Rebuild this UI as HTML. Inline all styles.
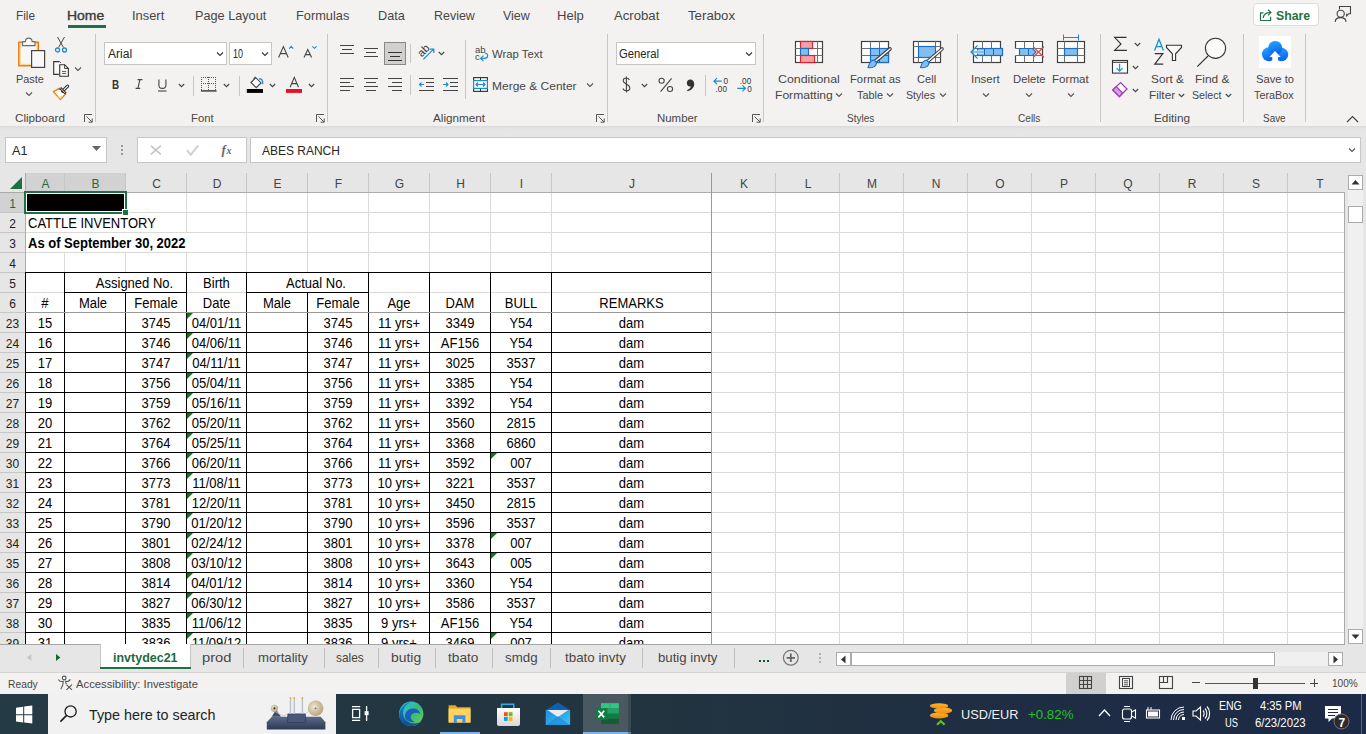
<!DOCTYPE html>
<html><head><meta charset="utf-8"><style>
html,body{margin:0;padding:0;}
body{width:1366px;height:734px;overflow:hidden;position:relative;background:#f3f2f1;font-family:"Liberation Sans", sans-serif;}
.t{position:absolute;white-space:pre;font-family:"Liberation Sans", sans-serif;}
.r{position:absolute;}
svg.r{overflow:visible;}
</style></head><body>
<div class="r" style="left:0px;top:0px;width:1366px;height:126px;background:#f3f2f1"></div>
<div class="r" style="left:0px;top:126px;width:1366px;height:47px;background:#e6e6e6"></div>
<div class="r" style="left:0px;top:126px;width:1366px;height:3px;background:linear-gradient(#d9d9d9,#e6e6e6)"></div>
<div class="t" style="left:16.33px;top:9.97px;font-size:12.2px;line-height:12.2px;color:#484644;font-weight:400;transform:scaleX(0.9703);transform-origin:0 0;">File</div>
<div class="t" style="left:67.36px;top:9.97px;font-size:12.2px;line-height:12.2px;color:#3b3a39;font-weight:400;transform:scaleX(1.1440);transform-origin:0 0;-webkit-text-stroke:0.35px #3b3a39;">Home</div>
<div class="t" style="left:132.14px;top:9.97px;font-size:12.2px;line-height:12.2px;color:#484644;font-weight:400;transform:scaleX(1.0567);transform-origin:0 0;">Insert</div>
<div class="t" style="left:195.16px;top:9.97px;font-size:12.2px;line-height:12.2px;color:#484644;font-weight:400;transform:scaleX(1.0403);transform-origin:0 0;">Page Layout</div>
<div class="t" style="left:296.35px;top:9.97px;font-size:12.2px;line-height:12.2px;color:#484644;font-weight:400;transform:scaleX(1.0504);transform-origin:0 0;">Formulas</div>
<div class="t" style="left:378.46px;top:9.97px;font-size:12.2px;line-height:12.2px;color:#484644;font-weight:400;transform:scaleX(1.0414);transform-origin:0 0;">Data</div>
<div class="t" style="left:433.98px;top:9.97px;font-size:12.2px;line-height:12.2px;color:#484644;font-weight:400;transform:scaleX(1.0215);transform-origin:0 0;">Review</div>
<div class="t" style="left:503.00px;top:9.97px;font-size:12.2px;line-height:12.2px;color:#484644;font-weight:400;transform:scaleX(1.0229);transform-origin:0 0;">View</div>
<div class="t" style="left:556.93px;top:9.97px;font-size:12.2px;line-height:12.2px;color:#484644;font-weight:400;transform:scaleX(1.0705);transform-origin:0 0;">Help</div>
<div class="t" style="left:614.00px;top:9.97px;font-size:12.2px;line-height:12.2px;color:#484644;font-weight:400;transform:scaleX(1.0794);transform-origin:0 0;">Acrobat</div>
<div class="t" style="left:688.00px;top:9.97px;font-size:12.2px;line-height:12.2px;color:#484644;font-weight:400;transform:scaleX(1.0864);transform-origin:0 0;">Terabox</div>
<div class="r" style="left:68px;top:25px;width:38px;height:3px;background:#1e7145"></div>
<div class="r" style="left:1253px;top:3px;width:66px;height:23px;background:#fff;border:1px solid #dedcda;box-sizing:border-box;border-radius:4px"></div>
<svg class="r" style="left:1256px;top:6px" width="19" height="18" viewBox="1256 6 19 18"><path d="M1263.5 12.8 H1260.5 V20.5 H1270.6 V16.8" fill="none" stroke="#217346" stroke-width="1.2"/><path d="M1263.2 18 C1263.6 14 1266.4 12.6 1270 12.6" fill="none" stroke="#217346" stroke-width="1.2"/><path d="M1268 9.8 L1271 12.6 L1268 15.4" fill="none" stroke="#217346" stroke-width="1.2"/></svg>
<div class="t" style="left:1276.00px;top:9.30px;font-size:13px;line-height:13px;color:#217346;font-weight:700;transform:scaleX(0.9471);transform-origin:0 0;">Share</div>
<svg class="r" style="left:1330px;top:4px" width="26" height="22" viewBox="1330 4 26 22"><circle cx="1340.7" cy="13.8" r="3.6" fill="none" stroke="#444" stroke-width="1.1"/><path d="M1335.2 22 C1335.2 19.2 1337.6 17.6 1340.6 17.6 C1343.6 17.6 1346 19.2 1346 22" fill="none" stroke="#444" stroke-width="1.1"/><path d="M1339.5 9.5 V6.5 H1350.5 V13.8 H1348.5 L1346.6 15.8 V13.8" fill="none" stroke="#444" stroke-width="1.1"/></svg>
<div class="r" style="left:95px;top:34px;width:1px;height:88px;background:#c8c6c4"></div>
<div class="r" style="left:327px;top:34px;width:1px;height:88px;background:#c8c6c4"></div>
<div class="r" style="left:607px;top:34px;width:1px;height:88px;background:#c8c6c4"></div>
<div class="r" style="left:763px;top:34px;width:1px;height:88px;background:#c8c6c4"></div>
<div class="r" style="left:957px;top:34px;width:1px;height:88px;background:#c8c6c4"></div>
<div class="r" style="left:1100px;top:34px;width:1px;height:88px;background:#c8c6c4"></div>
<div class="r" style="left:1243px;top:34px;width:1px;height:88px;background:#c8c6c4"></div>
<div class="r" style="left:1305px;top:34px;width:1px;height:88px;background:#c8c6c4"></div>
<div class="t" style="left:14.70px;top:112.73px;font-size:11.3px;line-height:11.3px;color:#484644;font-weight:400;transform:scaleX(1.0318);transform-origin:0 0;">Clipboard</div>
<div class="t" style="left:191.20px;top:112.73px;font-size:11.3px;line-height:11.3px;color:#484644;font-weight:400;transform:scaleX(0.9972);transform-origin:0 0;">Font</div>
<div class="t" style="left:432.80px;top:112.73px;font-size:11.3px;line-height:11.3px;color:#484644;font-weight:400;transform:scaleX(1.0353);transform-origin:0 0;">Alignment</div>
<div class="t" style="left:657.30px;top:112.73px;font-size:11.3px;line-height:11.3px;color:#484644;font-weight:400;transform:scaleX(1.0120);transform-origin:0 0;">Number</div>
<div class="t" style="left:846.70px;top:112.73px;font-size:11.3px;line-height:11.3px;color:#484644;font-weight:400;transform:scaleX(0.8870);transform-origin:0 0;">Styles</div>
<div class="t" style="left:1017.70px;top:112.73px;font-size:11.3px;line-height:11.3px;color:#484644;font-weight:400;transform:scaleX(0.8916);transform-origin:0 0;">Cells</div>
<div class="t" style="left:1153.60px;top:112.73px;font-size:11.3px;line-height:11.3px;color:#484644;font-weight:400;transform:scaleX(1.0450);transform-origin:0 0;">Editing</div>
<div class="t" style="left:1263.40px;top:112.73px;font-size:11.3px;line-height:11.3px;color:#484644;font-weight:400;transform:scaleX(0.8796);transform-origin:0 0;">Save</div>
<svg class="r" style="left:84px;top:114px;" width="9" height="9" viewBox="0 0 9 9"><path d="M0.5 8 V0.5 H8" fill="none" stroke="#555" stroke-width="1"/><path d="M2.5 2.5 L8 8 M4.5 8.2 H8.2 V4.5" fill="none" stroke="#555" stroke-width="1"/></svg>
<svg class="r" style="left:316px;top:114px;" width="9" height="9" viewBox="0 0 9 9"><path d="M0.5 8 V0.5 H8" fill="none" stroke="#555" stroke-width="1"/><path d="M2.5 2.5 L8 8 M4.5 8.2 H8.2 V4.5" fill="none" stroke="#555" stroke-width="1"/></svg>
<svg class="r" style="left:596px;top:114px;" width="9" height="9" viewBox="0 0 9 9"><path d="M0.5 8 V0.5 H8" fill="none" stroke="#555" stroke-width="1"/><path d="M2.5 2.5 L8 8 M4.5 8.2 H8.2 V4.5" fill="none" stroke="#555" stroke-width="1"/></svg>
<svg class="r" style="left:752px;top:114px;" width="9" height="9" viewBox="0 0 9 9"><path d="M0.5 8 V0.5 H8" fill="none" stroke="#555" stroke-width="1"/><path d="M2.5 2.5 L8 8 M4.5 8.2 H8.2 V4.5" fill="none" stroke="#555" stroke-width="1"/></svg>
<svg class="r" style="left:1346px;top:115px;" width="13" height="8" viewBox="0 0 13 8"><path d="M1 7 L6.5 1.5 L12 7" fill="none" stroke="#444" stroke-width="1.2"/></svg>
<svg class="r" style="left:14px;top:34px" width="36" height="38" viewBox="14 34 36 38"><rect x="18.8" y="42.2" width="19.6" height="23.6" fill="#fcd98a" stroke="#e3730f" stroke-width="1.3"/>
<rect x="20.8" y="45" width="15.6" height="18.8" fill="#f7f7f7"/>
<path d="M22.6 45.6 V41.6 H25.4 C25.6 37 31.8 37 32.2 41.6 H35 V45.6 Z" fill="#fafafa" stroke="#6a6a6a" stroke-width="1.1"/>
<rect x="31.6" y="50.6" width="13" height="16.8" fill="#f9f9f9" stroke="#444" stroke-width="1.2"/></svg>
<div class="t" style="left:15.70px;top:73.73px;font-size:11.3px;line-height:11.3px;color:#484644;font-weight:400;transform:scaleX(0.9649);transform-origin:0 0;">Paste</div>
<svg class="r" style="left:25px;top:91px;" width="8" height="6" viewBox="0 0 8 6"><path d="M1 1.5 L4 4.5 L7 1.5" fill="none" stroke="#555" stroke-width="1.1"/></svg>
<svg class="r" style="left:54px;top:36px;" width="14" height="17" viewBox="0 0 14 17"><path d="M3.5 1 L9.5 11.5 M10.5 1 L4.5 11.5" fill="none" stroke="#444" stroke-width="1"/><circle cx="3.5" cy="14" r="2" fill="none" stroke="#1e8bcd" stroke-width="1.3"/><circle cx="10.5" cy="14" r="2" fill="none" stroke="#1e8bcd" stroke-width="1.3"/></svg>
<svg class="r" style="left:50px;top:58px" width="22" height="22" viewBox="50 58 22 22"><path d="M59.6 61.6 H53.7 V74.4 H58.8" fill="#fafafa" stroke="#333" stroke-width="1.1"/><path d="M59.6 61.6 L60.8 62.8" stroke="#333" stroke-width="1"/>
<path d="M59.7 64.7 H64.6 L68.4 68.5 V76.2 H59.7 Z" fill="#fafafa" stroke="#333" stroke-width="1.1"/><path d="M64.6 64.7 V68.5 H68.4" fill="none" stroke="#333" stroke-width="0.9"/>
<path d="M62 71.4 H66.2 M62 73.4 H66.2" stroke="#444" stroke-width="0.9"/></svg>
<svg class="r" style="left:74px;top:66px;" width="8" height="6" viewBox="0 0 8 6"><path d="M1 1.5 L4 4.5 L7 1.5" fill="none" stroke="#555" stroke-width="1.1"/></svg>
<svg class="r" style="left:50px;top:82px" width="22" height="20" viewBox="50 82 22 20"><path d="M53.4 91.6 L59.8 88.2 L65.6 94 L60.4 99.6 Z" fill="#fff" stroke="#e67e17" stroke-width="1.4" stroke-linejoin="round"/>
<path d="M56.8 96.4 L62.8 96.2 L60.4 99 Z" fill="#fcd77c"/>
<path d="M62.6 91.2 L67.6 86.2" stroke="#333" stroke-width="3.2" stroke-linecap="round"/><path d="M62.6 91.2 L67.6 86.2" stroke="#f6f6f6" stroke-width="1.1" stroke-linecap="round"/>
<path d="M60.2 88 L65.8 93.6" stroke="#333" stroke-width="2.6"/><path d="M60.6 88.4 L65.4 93.2" stroke="#f6f6f6" stroke-width="0.8"/></svg>
<div class="r" style="left:104px;top:42px;width:123px;height:23px;background:#fff;border:1px solid #c8c6c4;box-sizing:border-box"></div>
<div class="t" style="left:107.50px;top:48.14px;font-size:12px;line-height:12px;color:#262626;font-weight:400;transform:scaleX(1.0069);transform-origin:0 0;">Arial</div>
<svg class="r" style="left:216px;top:51px;" width="8" height="6" viewBox="0 0 8 6"><path d="M1 1.5 L4 4.5 L7 1.5" fill="none" stroke="#333" stroke-width="1.1"/></svg>
<div class="r" style="left:229px;top:42px;width:43px;height:23px;background:#fff;border:1px solid #c8c6c4;box-sizing:border-box"></div>
<div class="t" style="left:232.80px;top:48.14px;font-size:12px;line-height:12px;color:#262626;font-weight:400;transform:scaleX(0.7460);transform-origin:0 0;">10</div>
<svg class="r" style="left:261px;top:51px;" width="8" height="6" viewBox="0 0 8 6"><path d="M1 1.5 L4 4.5 L7 1.5" fill="none" stroke="#333" stroke-width="1.1"/></svg>
<svg class="r" style="left:274px;top:40px" width="46" height="22" viewBox="274 40 46 22"><path d="M1278.6 57.5 L1283.4 46.6 L1288.2 57.5 M1280.4 53.6 H1286.4" transform="translate(-1000,0)" fill="none" stroke="#444" stroke-width="1.1"/>
<path d="M289.2 48.6 L291.2 46.3 L293.2 48.6" fill="none" stroke="#1e8bcd" stroke-width="1.1"/>
<path d="M304 57.5 L307.8 49.6 L311.6 57.5 M305.4 54.6 H310.2" fill="none" stroke="#444" stroke-width="1.1"/>
<path d="M312.4 46.4 L314.5 48.3 L316.6 46.4" fill="none" stroke="#1e8bcd" stroke-width="1.1"/></svg>
<svg class="r" style="left:108px;top:74px" width="212" height="22" viewBox="108 74 212 22"><path d="M139.9 79.6 L137.9 88.4 M137.6 79.6 H142.4 M135.6 88.4 H140.2" fill="none" stroke="#444" stroke-width="1.1"/>
<path d="M158.9 79.4 V85.2 C158.9 89.4 165.9 89.4 165.9 85.2 V79.4" fill="none" stroke="#444" stroke-width="1.1"/>
<path d="M158 91 H166.6" stroke="#444" stroke-width="1.1"/>
<rect x="201" y="77" width="1" height="1" fill="#555"/><rect x="201" y="83" width="1" height="1" fill="#555"/><rect x="203" y="77" width="1" height="1" fill="#555"/><rect x="203" y="83" width="1" height="1" fill="#555"/><rect x="205" y="77" width="1" height="1" fill="#555"/><rect x="205" y="83" width="1" height="1" fill="#555"/><rect x="207" y="77" width="1" height="1" fill="#555"/><rect x="207" y="83" width="1" height="1" fill="#555"/><rect x="209" y="77" width="1" height="1" fill="#555"/><rect x="209" y="83" width="1" height="1" fill="#555"/><rect x="211" y="77" width="1" height="1" fill="#555"/><rect x="211" y="83" width="1" height="1" fill="#555"/><rect x="213" y="77" width="1" height="1" fill="#555"/><rect x="213" y="83" width="1" height="1" fill="#555"/><rect x="215" y="77" width="1" height="1" fill="#555"/><rect x="215" y="83" width="1" height="1" fill="#555"/><rect x="201" y="77" width="1" height="1" fill="#555"/><rect x="208" y="77" width="1" height="1" fill="#555"/><rect x="215" y="77" width="1" height="1" fill="#555"/><rect x="201" y="79" width="1" height="1" fill="#555"/><rect x="208" y="79" width="1" height="1" fill="#555"/><rect x="215" y="79" width="1" height="1" fill="#555"/><rect x="201" y="81" width="1" height="1" fill="#555"/><rect x="208" y="81" width="1" height="1" fill="#555"/><rect x="215" y="81" width="1" height="1" fill="#555"/><rect x="201" y="83" width="1" height="1" fill="#555"/><rect x="208" y="83" width="1" height="1" fill="#555"/><rect x="215" y="83" width="1" height="1" fill="#555"/><rect x="201" y="85" width="1" height="1" fill="#555"/><rect x="208" y="85" width="1" height="1" fill="#555"/><rect x="215" y="85" width="1" height="1" fill="#555"/><rect x="201" y="87" width="1" height="1" fill="#555"/><rect x="208" y="87" width="1" height="1" fill="#555"/><rect x="215" y="87" width="1" height="1" fill="#555"/><rect x="201" y="89" width="1" height="1" fill="#555"/><rect x="208" y="89" width="1" height="1" fill="#555"/><rect x="215" y="89" width="1" height="1" fill="#555"/><rect x="201" y="90.2" width="15.5" height="1.4" fill="#333"/>
<path d="M251 82.5 L255.8 77.7 L261 82.9 L256.2 87.7 Z" fill="#fff" stroke="#444" stroke-width="1.1"/>
<path d="M253.6 78.8 L255.6 76.8" stroke="#444" stroke-width="1.1"/>
<path d="M258.8 79.2 C261.6 78 263.2 80.6 262.4 84.2" fill="none" stroke="#1e8bcd" stroke-width="1.4"/>
<rect x="246.8" y="89" width="16.2" height="3.9" fill="#000"/>
<path d="M290.1 87.3 L294.3 77.3 L298.5 87.3 M291.7 83.6 H296.9" fill="none" stroke="#444" stroke-width="1.1"/>
<rect x="286" y="89" width="16" height="3.9" fill="#e81123"/></svg>
<div class="t" style="left:111.80px;top:78.72px;font-size:12.5px;line-height:12.5px;color:#333;font-weight:700;transform:scaleX(0.7889);transform-origin:0 0;">B</div>
<svg class="r" style="left:177.5px;top:82.5px;" width="7" height="5" viewBox="0 0 7 5"><path d="M0.8 1 L3.5 3.7 L6.2 1" fill="none" stroke="#444" stroke-width="1.1"/></svg>
<div class="r" style="left:193px;top:76px;width:1px;height:20px;background:#c8c6c4"></div>
<svg class="r" style="left:222.8px;top:82.5px;" width="7" height="5" viewBox="0 0 7 5"><path d="M0.8 1 L3.5 3.7 L6.2 1" fill="none" stroke="#444" stroke-width="1.1"/></svg>
<div class="r" style="left:239px;top:76px;width:1px;height:20px;background:#c8c6c4"></div>
<svg class="r" style="left:269.1px;top:82.5px;" width="7" height="5" viewBox="0 0 7 5"><path d="M0.8 1 L3.5 3.7 L6.2 1" fill="none" stroke="#444" stroke-width="1.1"/></svg>
<svg class="r" style="left:308.0px;top:82.5px;" width="7" height="5" viewBox="0 0 7 5"><path d="M0.8 1 L3.5 3.7 L6.2 1" fill="none" stroke="#444" stroke-width="1.1"/></svg>
<svg class="r" style="left:338px;top:44px;" width="18" height="16" viewBox="0 0 18 16"><path d="M2 1.5 H16" stroke="#444" stroke-width="1"/><path d="M4 5.5 H14" stroke="#444" stroke-width="1"/><path d="M2 9.5 H16" stroke="#444" stroke-width="1"/></svg>
<svg class="r" style="left:362px;top:46px;" width="18" height="16" viewBox="0 0 18 16"><path d="M2 2.5 H16" stroke="#444" stroke-width="1"/><path d="M4 6.5 H14" stroke="#444" stroke-width="1"/><path d="M2 10.5 H16" stroke="#444" stroke-width="1"/></svg>
<div class="r" style="left:384px;top:42px;width:22px;height:23px;background:#d2d0ce;border:1px solid #8a8886;box-sizing:border-box"></div>
<svg class="r" style="left:386px;top:48px;" width="18" height="16" viewBox="0 0 18 16"><path d="M2 4.5 H16" stroke="#333" stroke-width="1"/><path d="M4 8.5 H14" stroke="#333" stroke-width="1"/><path d="M2 12.5 H16" stroke="#333" stroke-width="1"/></svg>
<div class="r" style="left:410px;top:44px;width:1px;height:19px;background:#c8c6c4"></div>
<svg class="r" style="left:412px;top:40px" width="26" height="24" viewBox="412 40 26 24"><text x="423.4" y="54.2" text-anchor="middle" font-family="Liberation Sans" font-size="11" fill="#333" transform="rotate(-45 423.4 50.4)">ab</text>
<path d="M423.4 59.4 L433.4 49.4 M429.8 49.2 H433.8 V53" fill="none" stroke="#1e8bcd" stroke-width="1.2"/></svg>
<svg class="r" style="left:438.0px;top:50.8px;" width="7" height="5" viewBox="0 0 7 5"><path d="M0.8 1 L3.5 3.7 L6.2 1" fill="none" stroke="#444" stroke-width="1.1"/></svg>
<div class="r" style="left:465px;top:40px;width:1px;height:59px;background:#c8c6c4"></div>
<svg class="r" style="left:472px;top:42px" width="20" height="22" viewBox="472 42 20 22"><text x="475" y="52.6" font-family="Liberation Sans" font-size="9.5" fill="#444">ab</text><text x="475" y="59.8" font-family="Liberation Sans" font-size="9.5" fill="#444">c</text>
<path d="M481.2 58.4 H484.4 C488.6 58.4 488.6 53 484.8 53" fill="none" stroke="#1e8bcd" stroke-width="1.2"/><path d="M483.4 55.6 L480.6 58.4 L483.4 61.2" fill="none" stroke="#1e8bcd" stroke-width="1.2"/></svg>
<div class="t" style="left:492.40px;top:48.73px;font-size:11.3px;line-height:11.3px;color:#484644;font-weight:400;transform:scaleX(1.0019);transform-origin:0 0;">Wrap Text</div>
<svg class="r" style="left:338px;top:77px;" width="18" height="16" viewBox="0 0 18 16"><path d="M2 1.5 H16" stroke="#444" stroke-width="1"/><path d="M2 5.5 H12" stroke="#444" stroke-width="1"/><path d="M2 9.5 H16" stroke="#444" stroke-width="1"/><path d="M2 13.5 H12" stroke="#444" stroke-width="1"/></svg>
<svg class="r" style="left:362px;top:77px;" width="18" height="16" viewBox="0 0 18 16"><path d="M2 1.5 H16" stroke="#444" stroke-width="1"/><path d="M4 5.5 H14" stroke="#444" stroke-width="1"/><path d="M2 9.5 H16" stroke="#444" stroke-width="1"/><path d="M4 13.5 H14" stroke="#444" stroke-width="1"/></svg>
<svg class="r" style="left:386px;top:77px;" width="18" height="16" viewBox="0 0 18 16"><path d="M2 1.5 H16" stroke="#444" stroke-width="1"/><path d="M6 5.5 H16" stroke="#444" stroke-width="1"/><path d="M2 9.5 H16" stroke="#444" stroke-width="1"/><path d="M6 13.5 H16" stroke="#444" stroke-width="1"/></svg>
<div class="r" style="left:410px;top:75px;width:1px;height:20px;background:#c8c6c4"></div>
<svg class="r" style="left:418px;top:77px;" width="17" height="16" viewBox="0 0 17 16"><path d="M1 1.5 H16 M8 5.5 H16 M8 9.5 H16 M1 13.5 H16" stroke="#444"/><path d="M6 7.5 H1.5 M3.5 5.5 L1.5 7.5 L3.5 9.5" fill="none" stroke="#1e8bcd" stroke-width="1.1"/></svg>
<svg class="r" style="left:442px;top:77px;" width="17" height="16" viewBox="0 0 17 16"><path d="M1 1.5 H16 M8 5.5 H16 M8 9.5 H16 M1 13.5 H16" stroke="#444"/><path d="M1 7.5 H6 M4 5.5 L6 7.5 L4 9.5" fill="none" stroke="#1e8bcd" stroke-width="1.1"/></svg>
<div class="r" style="left:465px;top:75px;width:1px;height:20px;background:#c8c6c4"></div>
<svg class="r" style="left:470px;top:74px" width="22" height="22" viewBox="470 74 22 22"><rect x="473.6" y="77.6" width="13.8" height="13.8" fill="none" stroke="#333" stroke-width="1.1"/>
<path d="M480.5 77.6 V80.5 M480.5 88.5 V91.4" stroke="#333" stroke-width="1"/>
<rect x="473.6" y="80.6" width="13.8" height="7.8" fill="#fff" stroke="#1e8bcd" stroke-width="1.2"/>
<path d="M476 84.5 H485 M478 82.5 L476 84.5 L478 86.5 M483 82.5 L485 84.5 L483 86.5" fill="none" stroke="#1e8bcd" stroke-width="1.2"/></svg>
<div class="t" style="left:492.40px;top:80.73px;font-size:11.3px;line-height:11.3px;color:#484644;font-weight:400;transform:scaleX(1.0603);transform-origin:0 0;">Merge &amp; Center</div>
<svg class="r" style="left:586px;top:82px;" width="8" height="6" viewBox="0 0 8 6"><path d="M1 1.5 L4 4.5 L7 1.5" fill="none" stroke="#555" stroke-width="1.1"/></svg>
<div class="r" style="left:616px;top:42px;width:140px;height:23px;background:#fff;border:1px solid #c8c6c4;box-sizing:border-box"></div>
<div class="t" style="left:619.20px;top:48.14px;font-size:12px;line-height:12px;color:#262626;font-weight:400;transform:scaleX(0.9399);transform-origin:0 0;">General</div>
<svg class="r" style="left:745px;top:51px;" width="8" height="6" viewBox="0 0 8 6"><path d="M1 1.5 L4 4.5 L7 1.5" fill="none" stroke="#333" stroke-width="1.1"/></svg>
<svg class="r" style="left:618px;top:72px" width="142" height="24" viewBox="618 72 142 24"><path d="M629.4 80 C628.6 78.4 627.4 78 626.2 78 C624.4 78 623.2 79.2 623.2 80.8 C623.2 84.4 629.8 83.6 629.8 88 C629.8 89.8 628.4 90.8 626.4 90.8 C624.8 90.8 623.6 90.2 622.8 88.6 M626.4 76.6 V92.6" fill="none" stroke="#444" stroke-width="1.1"/>
<path d="M671.6 78.4 L660.6 91.6" stroke="#444" stroke-width="1.1"/>
<ellipse cx="661.6" cy="80.7" rx="2.6" ry="2.5" fill="none" stroke="#444" stroke-width="1.1"/>
<ellipse cx="670" cy="89" rx="2.6" ry="2.5" fill="none" stroke="#444" stroke-width="1.1"/>
<path d="M690.2 79.6 C692.6 79.6 694.2 81.4 694.2 84 C694.2 87.6 691.6 90.2 687.6 91.2 L687 90.2 C689.4 89.2 690.6 88 690.8 86.6 C688.4 86.6 686.8 85.2 686.8 83.2 C686.8 81.2 688.2 79.6 690.2 79.6 Z" fill="#333"/>
<path d="M721.8 81.2 H714 M717 78.2 L714 81.2 L717 84.2" fill="none" stroke="#1e8bcd" stroke-width="1.2"/>
<path d="M737.2 88.3 H745.4 M742.4 85.3 L745.4 88.3 L742.4 91.3" fill="none" stroke="#1e8bcd" stroke-width="1.2"/>
<text x="723.4" y="83.5" font-family="Liberation Sans" font-size="8.2" fill="#333">0</text>
<text x="715.6" y="91.7" font-family="Liberation Sans" font-size="8.2" fill="#333">.00</text>
<text x="739.8" y="83.5" font-family="Liberation Sans" font-size="8.2" fill="#333">.00</text>
<text x="747.2" y="91.7" font-family="Liberation Sans" font-size="8.2" fill="#333">0</text></svg>
<svg class="r" style="left:640.8px;top:82.5px;" width="7" height="5" viewBox="0 0 7 5"><path d="M0.8 1 L3.5 3.7 L6.2 1" fill="none" stroke="#444" stroke-width="1.1"/></svg>
<div class="r" style="left:705px;top:75px;width:1px;height:21px;background:#c8c6c4"></div>
<svg class="r" style="left:790px;top:36px" width="40" height="32" viewBox="790 36 40 32"><rect x="795.5" y="41.5" width="27" height="21" fill="#fff" stroke="#404040" stroke-width="1.2"/>
<path d="M795.5 48.5 H822.5 M795.5 55.5 H822.5 M800.5 41.5 V62.5 M817.5 41.5 V62.5" stroke="#707070" stroke-width="1"/>
<rect x="800.5" y="41.5" width="12" height="7" fill="#f79ea6" stroke="#d9262e" stroke-width="1.2"/>
<rect x="800.5" y="48.5" width="8" height="7" fill="#83beec" stroke="#1a6fc4" stroke-width="1.2"/>
<rect x="800.5" y="55.5" width="14" height="7" fill="#f79ea6" stroke="#d9262e" stroke-width="1.2"/></svg>
<svg class="r" style="left:855px;top:36px" width="41" height="36" viewBox="855 36 41 36"><rect x="861.5" y="41.5" width="27" height="21" fill="#fff" stroke="#404040" stroke-width="1.2"/>
<path d="M861.5 48.5 H888.5 M861.5 55.5 H888.5 M870.5 41.5 V62.5 M879.5 41.5 V62.5" stroke="#707070" stroke-width="1"/>
<rect x="870.5" y="48.5" width="18" height="14" fill="#83beec" stroke="#1a6fc4" stroke-width="1.2"/>
<path d="M870.5 55.5 H888.5 M879.5 48.5 V62.5" stroke="#1a6fc4" stroke-width="1"/><path d="M874.5 62.0 L890 49" stroke="#404040" stroke-width="3.6" stroke-linecap="round"/>
<path d="M874.5 62.0 L890 49" stroke="#fff" stroke-width="1.5" stroke-linecap="round"/>
<path d="M868 67.5 C872 68.5 876.5 66.5 876.5 62.5 L874 60.0 C870 60.0 869 64.5 868 67.5 Z" fill="#83beec" stroke="#1a6fc4" stroke-width="1.1"/></svg>
<svg class="r" style="left:908px;top:36px" width="40" height="36" viewBox="908 36 40 36"><rect x="913.5" y="41.5" width="27" height="21" fill="#fff" stroke="#404040" stroke-width="1.2"/>
<path d="M913.5 46.5 H940.5 M913.5 57.5 H940.5 M918.5 41.5 V62.5 M935.5 41.5 V62.5" stroke="#707070" stroke-width="1"/>
<rect x="918.5" y="46.5" width="17" height="11" fill="#83beec" stroke="#1a6fc4" stroke-width="1.2"/><path d="M927.0 62.0 L942 49" stroke="#404040" stroke-width="3.6" stroke-linecap="round"/>
<path d="M927.0 62.0 L942 49" stroke="#fff" stroke-width="1.5" stroke-linecap="round"/>
<path d="M920.5 67.5 C924.5 68.5 929.0 66.5 929.0 62.5 L926.5 60.0 C922.5 60.0 921.5 64.5 920.5 67.5 Z" fill="#83beec" stroke="#1a6fc4" stroke-width="1.1"/></svg>
<div class="t" style="left:778.30px;top:73.73px;font-size:11.3px;line-height:11.3px;color:#484644;font-weight:400;transform:scaleX(1.0944);transform-origin:0 0;">Conditional</div>
<div class="t" style="left:774.50px;top:89.73px;font-size:11.3px;line-height:11.3px;color:#484644;font-weight:400;transform:scaleX(1.0706);transform-origin:0 0;">Formatting</div>
<svg class="r" style="left:835px;top:92px;" width="8" height="6" viewBox="0 0 8 6"><path d="M1 1.5 L4 4.5 L7 1.5" fill="none" stroke="#555" stroke-width="1.1"/></svg>
<div class="t" style="left:849.50px;top:73.73px;font-size:11.3px;line-height:11.3px;color:#484644;font-weight:400;transform:scaleX(0.9961);transform-origin:0 0;">Format as</div>
<div class="t" style="left:857.20px;top:89.73px;font-size:11.3px;line-height:11.3px;color:#484644;font-weight:400;transform:scaleX(0.9654);transform-origin:0 0;">Table</div>
<svg class="r" style="left:886px;top:92px;" width="8" height="6" viewBox="0 0 8 6"><path d="M1 1.5 L4 4.5 L7 1.5" fill="none" stroke="#555" stroke-width="1.1"/></svg>
<div class="t" style="left:917.40px;top:73.73px;font-size:11.3px;line-height:11.3px;color:#484644;font-weight:400;transform:scaleX(0.9815);transform-origin:0 0;">Cell</div>
<div class="t" style="left:906.40px;top:89.73px;font-size:11.3px;line-height:11.3px;color:#484644;font-weight:400;transform:scaleX(0.9417);transform-origin:0 0;">Styles</div>
<svg class="r" style="left:939px;top:92px;" width="8" height="6" viewBox="0 0 8 6"><path d="M1 1.5 L4 4.5 L7 1.5" fill="none" stroke="#555" stroke-width="1.1"/></svg>
<svg class="r" style="left:966px;top:36px" width="40" height="32" viewBox="966 36 40 32"><rect x="973.5" y="41.5" width="27" height="21" fill="#fff" stroke="#404040" stroke-width="1.2"/>
<path d="M973.5 48.5 H1000.5 M973.5 55.5 H1000.5 M982.5 41.5 V62.5 M991.5 41.5 V62.5" stroke="#707070" stroke-width="1"/>
<rect x="977.5" y="48.5" width="25" height="7" fill="#83beec" stroke="#1a6fc4" stroke-width="1.2"/>
<path d="M984.5 48.5 V55.5 M993.5 48.5 V55.5" stroke="#1a6fc4" stroke-width="1"/>
<path d="M971.5 52 H984" stroke="#f3f2f1" stroke-width="3"/>
<path d="M971.5 52 H984 M977.5 45.5 L971 52 L977.5 58.5" fill="none" stroke="#1e8bcd" stroke-width="1.2"/></svg>
<div class="t" style="left:970.98px;top:73.73px;font-size:11.3px;line-height:11.3px;color:#484644;font-weight:400;transform:scaleX(1.0173);transform-origin:0 0;">Insert</div>
<svg class="r" style="left:982px;top:92px;" width="8" height="6" viewBox="0 0 8 6"><path d="M1 1.5 L4 4.5 L7 1.5" fill="none" stroke="#555" stroke-width="1.1"/></svg>
<svg class="r" style="left:1010px;top:36px" width="40" height="32" viewBox="1010 36 40 32"><path d="M1015.5 48.5 V41.5 H1042.5 V62.5 H1015.5 V55.5" fill="#fff" stroke="#404040" stroke-width="1.2"/>
<path d="M1015.5 48.5 H1042.5 M1015.5 55.5 H1042.5 M1024.5 41.5 V62.5 M1033.5 41.5 V62.5" stroke="#707070" stroke-width="1"/>
<path d="M1019.5 48.5 H1032.5 L1036 52 L1032.5 55.5 H1019.5 Z" fill="#83beec" stroke="#1a6fc4" stroke-width="1.2"/>
<path d="M1028.5 48.5 V55.5" stroke="#1a6fc4" stroke-width="1"/>
<path d="M1033 46.5 L1044 57.5 M1044 46.5 L1033 57.5" stroke="#e8464f" stroke-width="1.2"/></svg>
<div class="t" style="left:1012.50px;top:73.73px;font-size:11.3px;line-height:11.3px;color:#484644;font-weight:400;transform:scaleX(0.9978);transform-origin:0 0;">Delete</div>
<svg class="r" style="left:1025px;top:92px;" width="8" height="6" viewBox="0 0 8 6"><path d="M1 1.5 L4 4.5 L7 1.5" fill="none" stroke="#555" stroke-width="1.1"/></svg>
<svg class="r" style="left:1052px;top:32px" width="38" height="36" viewBox="1052 32 38 36"><rect x="1057.5" y="41.5" width="27" height="21" fill="#fff" stroke="#404040" stroke-width="1.2"/>
<path d="M1057.5 48.5 H1084.5 M1057.5 55.5 H1084.5 M1064.5 41.5 V62.5 M1077.5 41.5 V62.5" stroke="#707070" stroke-width="1"/>
<rect x="1064.5" y="48.5" width="13" height="7" fill="#83beec" stroke="#1a6fc4" stroke-width="1.2"/>
<path d="M1063.5 37.5 H1078.5 M1063.5 34.5 V40.5 M1078.5 34.5 V40.5" stroke="#1e8bcd" stroke-width="1"/></svg>
<div class="t" style="left:1052.40px;top:73.73px;font-size:11.3px;line-height:11.3px;color:#484644;font-weight:400;transform:scaleX(1.0262);transform-origin:0 0;">Format</div>
<svg class="r" style="left:1067px;top:92px;" width="8" height="6" viewBox="0 0 8 6"><path d="M1 1.5 L4 4.5 L7 1.5" fill="none" stroke="#555" stroke-width="1.1"/></svg>
<svg class="r" style="left:1110px;top:34px" width="20" height="66" viewBox="1110 34 20 66"><path d="M1126 38 V37.4 H1114.6 L1121 44 L1114.6 50.4 H1126.4 V49.8" fill="none" stroke="#333" stroke-width="1.1"/>
<rect x="1112.5" y="60.5" width="15" height="12.6" fill="#fff" stroke="#333" stroke-width="1.1"/>
<path d="M1112.5 62.3 H1127.5" stroke="#333" stroke-width="1"/>
<path d="M1119.6 63.8 V71 M1116.6 68.2 L1119.6 71.2 L1122.6 68.2" fill="none" stroke="#1e8bcd" stroke-width="1.2"/>
<path d="M1112.8 90 L1120.6 82.6 L1127 89 L1119.4 96.6 Z" fill="#fff" stroke="#a03cb9" stroke-width="1.3"/>
<path d="M1112.8 90 L1116.2 86.6 L1122.6 93 L1119.4 96.6 Z" fill="#d79ee6" stroke="#a03cb9" stroke-width="1.3"/></svg>
<svg class="r" style="left:1134.1px;top:41.9px;" width="7" height="5" viewBox="0 0 7 5"><path d="M0.8 1 L3.5 3.7 L6.2 1" fill="none" stroke="#444" stroke-width="1.1"/></svg>
<svg class="r" style="left:1131.9px;top:64.5px;" width="7" height="5" viewBox="0 0 7 5"><path d="M0.8 1 L3.5 3.7 L6.2 1" fill="none" stroke="#444" stroke-width="1.1"/></svg>
<svg class="r" style="left:1131.6px;top:87.8px;" width="7" height="5" viewBox="0 0 7 5"><path d="M0.8 1 L3.5 3.7 L6.2 1" fill="none" stroke="#444" stroke-width="1.1"/></svg>
<svg class="r" style="left:1150px;top:36px" width="36" height="32" viewBox="1150 36 36 32"><path d="M1154.6 50.6 L1159 39.2 L1163.4 50.6 M1156.2 46.6 H1161.8" fill="none" stroke="#1e8bcd" stroke-width="1.3"/>
<path d="M1154.8 53.6 H1162.8 L1154.8 64.2 H1163.2" fill="none" stroke="#333" stroke-width="1.2"/>
<path d="M1166.5 45.3 H1181.5 V47.5 L1175.6 53.8 V60.5 H1172.4 V53.8 L1166.5 47.5 Z" fill="#fafafa" stroke="#333" stroke-width="1.1"/></svg>
<div class="t" style="left:1151.00px;top:73.73px;font-size:11.3px;line-height:11.3px;color:#484644;font-weight:400;transform:scaleX(1.0484);transform-origin:0 0;">Sort &amp;</div>
<div class="t" style="left:1149.30px;top:89.73px;font-size:11.3px;line-height:11.3px;color:#484644;font-weight:400;transform:scaleX(1.0378);transform-origin:0 0;">Filter</div>
<svg class="r" style="left:1178.0px;top:92.5px;" width="7" height="5" viewBox="0 0 7 5"><path d="M0.8 1 L3.5 3.7 L6.2 1" fill="none" stroke="#444" stroke-width="1.1"/></svg>
<svg class="r" style="left:1194px;top:36px" width="36" height="34" viewBox="1194 36 36 34"><circle cx="1215.5" cy="48.3" r="10.1" fill="#fafafa" stroke="#333" stroke-width="1.1"/>
<path d="M1208 56 L1197.3 66.7" stroke="#333" stroke-width="1.1"/></svg>
<div class="t" style="left:1194.70px;top:73.73px;font-size:11.3px;line-height:11.3px;color:#484644;font-weight:400;transform:scaleX(1.0569);transform-origin:0 0;">Find &amp;</div>
<div class="t" style="left:1191.60px;top:89.73px;font-size:11.3px;line-height:11.3px;color:#484644;font-weight:400;transform:scaleX(0.9393);transform-origin:0 0;">Select</div>
<svg class="r" style="left:1225.3px;top:92.5px;" width="7" height="5" viewBox="0 0 7 5"><path d="M0.8 1 L3.5 3.7 L6.2 1" fill="none" stroke="#444" stroke-width="1.1"/></svg>
<div class="r" style="left:1259px;top:36px;width:32px;height:32px;background:#fff"></div>
<svg class="r" style="left:1259px;top:36px" width="32" height="32" viewBox="1259 36 32 32"><defs><linearGradient id="tbg" x1="0" y1="0" x2="0.3" y2="1"><stop offset="0" stop-color="#2aa8ff"/><stop offset="1" stop-color="#0a66f0"/></linearGradient></defs>
<circle cx="1269" cy="54.2" r="7" fill="url(#tbg)"/><circle cx="1281.5" cy="54.5" r="6.7" fill="url(#tbg)"/><circle cx="1275.2" cy="48" r="7.1" fill="url(#tbg)"/>
<path d="M1275 50.9 L1280.6 57 H1278 V63 H1272.3 V57 H1269.6 Z" fill="#fff"/></svg>
<div class="t" style="left:1256.00px;top:73.73px;font-size:11.3px;line-height:11.3px;color:#484644;font-weight:400;transform:scaleX(0.9914);transform-origin:0 0;">Save to</div>
<div class="t" style="left:1254.30px;top:89.73px;font-size:11.3px;line-height:11.3px;color:#484644;font-weight:400;transform:scaleX(0.9547);transform-origin:0 0;">TeraBox</div>
<div class="r" style="left:5px;top:137px;width:102px;height:26px;background:#fff;border:1px solid #c6c6c6;box-sizing:border-box"></div>
<div class="t" style="left:12.10px;top:145.14px;font-size:12px;line-height:12px;color:#262626;font-weight:400;transform:scaleX(1.0531);transform-origin:0 0;">A1</div>
<svg class="r" style="left:92px;top:146px;" width="9" height="6" viewBox="0 0 9 6"><path d="M0 0 H9 L4.5 5 Z" fill="#666"/></svg>
<div class="r" style="left:121px;top:145px;width:2px;height:2px;background:#999"></div>
<div class="r" style="left:121px;top:149px;width:2px;height:2px;background:#999"></div>
<div class="r" style="left:121px;top:153px;width:2px;height:2px;background:#999"></div>
<div class="r" style="left:137px;top:137px;width:110px;height:26px;background:#fff;border:1px solid #c6c6c6;box-sizing:border-box"></div>
<svg class="r" style="left:146px;top:140px" width="94" height="20" viewBox="146 140 94 20"><path d="M150.8 145.6 L160.9 154.4 M160.9 145.6 L150.8 154.4" stroke="#c4c4c4" stroke-width="1.5"/>
<path d="M186.8 150.2 L190.8 154.8 L198.2 145.4" fill="none" stroke="#cfcfcf" stroke-width="2"/>
<text x="221.5" y="154" font-family="Liberation Serif" font-style="italic" font-weight="700" font-size="13" fill="#666">f</text>
<text x="226.6" y="154" font-family="Liberation Serif" font-style="italic" font-weight="700" font-size="10" fill="#666">x</text></svg>
<div class="r" style="left:250px;top:137px;width:1111px;height:26px;background:#fff;border:1px solid #c6c6c6;box-sizing:border-box"></div>
<div class="t" style="left:262.20px;top:145.14px;font-size:12px;line-height:12px;color:#262626;font-weight:400;transform:scaleX(0.9980);transform-origin:0 0;">ABES RANCH</div>
<svg class="r" style="left:1348px;top:147px;" width="8" height="6" viewBox="0 0 8 6"><path d="M1 1.5 L4 4.5 L7 1.5" fill="none" stroke="#555" stroke-width="1.1"/></svg>
<div class="r" style="left:0px;top:173px;width:1345px;height:471px;background:#fff"></div>
<div class="r" style="left:0px;top:173px;width:1345px;height:19px;background:#e6e6e6"></div>
<div class="r" style="left:0px;top:192px;width:25px;height:452px;background:#e6e6e6"></div>
<div class="r" style="left:26px;top:173px;width:100px;height:19px;background:#d2d2d2"></div>
<div class="r" style="left:0px;top:193px;width:25px;height:19px;background:#d2d2d2"></div>
<svg class="r" style="left:10px;top:177px;" width="13" height="13" viewBox="0 0 13 13"><path d="M12 0 V12 H0 Z" fill="#1f7145"/></svg>
<div class="r" style="left:64px;top:253px;width:1px;height:391px;background:#dadada"></div>
<div class="r" style="left:125px;top:192px;width:1px;height:20px;background:#dadada"></div>
<div class="r" style="left:125px;top:253px;width:1px;height:19px;background:#dadada"></div>
<div class="r" style="left:125px;top:293px;width:1px;height:351px;background:#dadada"></div>
<div class="r" style="left:186px;top:192px;width:1px;height:40px;background:#dadada"></div>
<div class="r" style="left:186px;top:253px;width:1px;height:391px;background:#dadada"></div>
<div class="r" style="left:246px;top:192px;width:1px;height:452px;background:#dadada"></div>
<div class="r" style="left:307px;top:192px;width:1px;height:80px;background:#dadada"></div>
<div class="r" style="left:307px;top:293px;width:1px;height:351px;background:#dadada"></div>
<div class="r" style="left:368px;top:192px;width:1px;height:452px;background:#dadada"></div>
<div class="r" style="left:429px;top:192px;width:1px;height:452px;background:#dadada"></div>
<div class="r" style="left:490px;top:192px;width:1px;height:452px;background:#dadada"></div>
<div class="r" style="left:551px;top:192px;width:1px;height:452px;background:#dadada"></div>
<div class="r" style="left:711px;top:192px;width:1px;height:452px;background:#dadada"></div>
<div class="r" style="left:775px;top:192px;width:1px;height:452px;background:#dadada"></div>
<div class="r" style="left:839px;top:192px;width:1px;height:452px;background:#dadada"></div>
<div class="r" style="left:903px;top:192px;width:1px;height:452px;background:#dadada"></div>
<div class="r" style="left:967px;top:192px;width:1px;height:452px;background:#dadada"></div>
<div class="r" style="left:1031px;top:192px;width:1px;height:452px;background:#dadada"></div>
<div class="r" style="left:1095px;top:192px;width:1px;height:452px;background:#dadada"></div>
<div class="r" style="left:1159px;top:192px;width:1px;height:452px;background:#dadada"></div>
<div class="r" style="left:1223px;top:192px;width:1px;height:452px;background:#dadada"></div>
<div class="r" style="left:1287px;top:192px;width:1px;height:452px;background:#dadada"></div>
<div class="r" style="left:1345px;top:192px;width:1px;height:452px;background:#dadada"></div>
<div class="r" style="left:25px;top:212px;width:1319px;height:1px;background:#dadada"></div>
<div class="r" style="left:25px;top:232px;width:1319px;height:1px;background:#dadada"></div>
<div class="r" style="left:25px;top:252px;width:1319px;height:1px;background:#dadada"></div>
<div class="r" style="left:25px;top:272px;width:1319px;height:1px;background:#dadada"></div>
<div class="r" style="left:25px;top:292px;width:1319px;height:1px;background:#dadada"></div>
<div class="r" style="left:25px;top:312px;width:1319px;height:1px;background:#dadada"></div>
<div class="r" style="left:25px;top:332px;width:1319px;height:1px;background:#dadada"></div>
<div class="r" style="left:25px;top:352px;width:1319px;height:1px;background:#dadada"></div>
<div class="r" style="left:25px;top:372px;width:1319px;height:1px;background:#dadada"></div>
<div class="r" style="left:25px;top:392px;width:1319px;height:1px;background:#dadada"></div>
<div class="r" style="left:25px;top:412px;width:1319px;height:1px;background:#dadada"></div>
<div class="r" style="left:25px;top:432px;width:1319px;height:1px;background:#dadada"></div>
<div class="r" style="left:25px;top:452px;width:1319px;height:1px;background:#dadada"></div>
<div class="r" style="left:25px;top:472px;width:1319px;height:1px;background:#dadada"></div>
<div class="r" style="left:25px;top:492px;width:1319px;height:1px;background:#dadada"></div>
<div class="r" style="left:25px;top:512px;width:1319px;height:1px;background:#dadada"></div>
<div class="r" style="left:25px;top:532px;width:1319px;height:1px;background:#dadada"></div>
<div class="r" style="left:25px;top:552px;width:1319px;height:1px;background:#dadada"></div>
<div class="r" style="left:25px;top:572px;width:1319px;height:1px;background:#dadada"></div>
<div class="r" style="left:25px;top:592px;width:1319px;height:1px;background:#dadada"></div>
<div class="r" style="left:25px;top:612px;width:1319px;height:1px;background:#dadada"></div>
<div class="r" style="left:25px;top:632px;width:1319px;height:1px;background:#dadada"></div>
<div class="r" style="left:25px;top:652px;width:1319px;height:1px;background:#dadada"></div>
<div class="r" style="left:64px;top:173px;width:1px;height:19px;background:#c6c6c6"></div>
<div class="r" style="left:125px;top:173px;width:1px;height:19px;background:#c6c6c6"></div>
<div class="r" style="left:186px;top:173px;width:1px;height:19px;background:#c6c6c6"></div>
<div class="r" style="left:246px;top:173px;width:1px;height:19px;background:#c6c6c6"></div>
<div class="r" style="left:307px;top:173px;width:1px;height:19px;background:#c6c6c6"></div>
<div class="r" style="left:368px;top:173px;width:1px;height:19px;background:#c6c6c6"></div>
<div class="r" style="left:429px;top:173px;width:1px;height:19px;background:#c6c6c6"></div>
<div class="r" style="left:490px;top:173px;width:1px;height:19px;background:#c6c6c6"></div>
<div class="r" style="left:551px;top:173px;width:1px;height:19px;background:#c6c6c6"></div>
<div class="r" style="left:711px;top:173px;width:1px;height:19px;background:#c6c6c6"></div>
<div class="r" style="left:775px;top:173px;width:1px;height:19px;background:#c6c6c6"></div>
<div class="r" style="left:839px;top:173px;width:1px;height:19px;background:#c6c6c6"></div>
<div class="r" style="left:903px;top:173px;width:1px;height:19px;background:#c6c6c6"></div>
<div class="r" style="left:967px;top:173px;width:1px;height:19px;background:#c6c6c6"></div>
<div class="r" style="left:1031px;top:173px;width:1px;height:19px;background:#c6c6c6"></div>
<div class="r" style="left:1095px;top:173px;width:1px;height:19px;background:#c6c6c6"></div>
<div class="r" style="left:1159px;top:173px;width:1px;height:19px;background:#c6c6c6"></div>
<div class="r" style="left:1223px;top:173px;width:1px;height:19px;background:#c6c6c6"></div>
<div class="r" style="left:1287px;top:173px;width:1px;height:19px;background:#c6c6c6"></div>
<div class="r" style="left:1345px;top:173px;width:1px;height:19px;background:#c6c6c6"></div>
<div class="r" style="left:0px;top:192px;width:1344px;height:1px;background:#ababab"></div>
<div class="r" style="left:25px;top:173px;width:1px;height:471px;background:#ababab"></div>
<div class="r" style="left:0px;top:212px;width:25px;height:1px;background:#c6c6c6"></div>
<div class="r" style="left:0px;top:232px;width:25px;height:1px;background:#c6c6c6"></div>
<div class="r" style="left:0px;top:252px;width:25px;height:1px;background:#c6c6c6"></div>
<div class="r" style="left:0px;top:272px;width:25px;height:1px;background:#c6c6c6"></div>
<div class="r" style="left:0px;top:292px;width:25px;height:1px;background:#c6c6c6"></div>
<div class="r" style="left:0px;top:312px;width:25px;height:1px;background:#c6c6c6"></div>
<div class="r" style="left:0px;top:332px;width:25px;height:1px;background:#c6c6c6"></div>
<div class="r" style="left:0px;top:352px;width:25px;height:1px;background:#c6c6c6"></div>
<div class="r" style="left:0px;top:372px;width:25px;height:1px;background:#c6c6c6"></div>
<div class="r" style="left:0px;top:392px;width:25px;height:1px;background:#c6c6c6"></div>
<div class="r" style="left:0px;top:412px;width:25px;height:1px;background:#c6c6c6"></div>
<div class="r" style="left:0px;top:432px;width:25px;height:1px;background:#c6c6c6"></div>
<div class="r" style="left:0px;top:452px;width:25px;height:1px;background:#c6c6c6"></div>
<div class="r" style="left:0px;top:472px;width:25px;height:1px;background:#c6c6c6"></div>
<div class="r" style="left:0px;top:492px;width:25px;height:1px;background:#c6c6c6"></div>
<div class="r" style="left:0px;top:512px;width:25px;height:1px;background:#c6c6c6"></div>
<div class="r" style="left:0px;top:532px;width:25px;height:1px;background:#c6c6c6"></div>
<div class="r" style="left:0px;top:552px;width:25px;height:1px;background:#c6c6c6"></div>
<div class="r" style="left:0px;top:572px;width:25px;height:1px;background:#c6c6c6"></div>
<div class="r" style="left:0px;top:592px;width:25px;height:1px;background:#c6c6c6"></div>
<div class="r" style="left:0px;top:612px;width:25px;height:1px;background:#c6c6c6"></div>
<div class="r" style="left:0px;top:632px;width:25px;height:1px;background:#c6c6c6"></div>
<div class="r" style="left:0px;top:652px;width:25px;height:1px;background:#c6c6c6"></div>
<div class="t" style="left:26px;width:39px;text-align:center;top:177.84px;font-size:12px;line-height:12px;color:#1e6b41;font-weight:400;">A</div>
<div class="t" style="left:65px;width:61px;text-align:center;top:177.84px;font-size:12px;line-height:12px;color:#1e6b41;font-weight:400;">B</div>
<div class="t" style="left:126px;width:61px;text-align:center;top:177.84px;font-size:12px;line-height:12px;color:#444;font-weight:400;">C</div>
<div class="t" style="left:187px;width:60px;text-align:center;top:177.84px;font-size:12px;line-height:12px;color:#444;font-weight:400;">D</div>
<div class="t" style="left:247px;width:61px;text-align:center;top:177.84px;font-size:12px;line-height:12px;color:#444;font-weight:400;">E</div>
<div class="t" style="left:308px;width:61px;text-align:center;top:177.84px;font-size:12px;line-height:12px;color:#444;font-weight:400;">F</div>
<div class="t" style="left:369px;width:61px;text-align:center;top:177.84px;font-size:12px;line-height:12px;color:#444;font-weight:400;">G</div>
<div class="t" style="left:430px;width:61px;text-align:center;top:177.84px;font-size:12px;line-height:12px;color:#444;font-weight:400;">H</div>
<div class="t" style="left:491px;width:61px;text-align:center;top:177.84px;font-size:12px;line-height:12px;color:#444;font-weight:400;">I</div>
<div class="t" style="left:552px;width:160px;text-align:center;top:177.84px;font-size:12px;line-height:12px;color:#444;font-weight:400;">J</div>
<div class="t" style="left:712px;width:64px;text-align:center;top:177.84px;font-size:12px;line-height:12px;color:#444;font-weight:400;">K</div>
<div class="t" style="left:776px;width:64px;text-align:center;top:177.84px;font-size:12px;line-height:12px;color:#444;font-weight:400;">L</div>
<div class="t" style="left:840px;width:64px;text-align:center;top:177.84px;font-size:12px;line-height:12px;color:#444;font-weight:400;">M</div>
<div class="t" style="left:904px;width:64px;text-align:center;top:177.84px;font-size:12px;line-height:12px;color:#444;font-weight:400;">N</div>
<div class="t" style="left:968px;width:64px;text-align:center;top:177.84px;font-size:12px;line-height:12px;color:#444;font-weight:400;">O</div>
<div class="t" style="left:1032px;width:64px;text-align:center;top:177.84px;font-size:12px;line-height:12px;color:#444;font-weight:400;">P</div>
<div class="t" style="left:1096px;width:64px;text-align:center;top:177.84px;font-size:12px;line-height:12px;color:#444;font-weight:400;">Q</div>
<div class="t" style="left:1160px;width:64px;text-align:center;top:177.84px;font-size:12px;line-height:12px;color:#444;font-weight:400;">R</div>
<div class="t" style="left:1224px;width:64px;text-align:center;top:177.84px;font-size:12px;line-height:12px;color:#444;font-weight:400;">S</div>
<div class="t" style="left:1288px;width:64px;text-align:center;top:177.84px;font-size:12px;line-height:12px;color:#444;font-weight:400;">T</div>
<div class="t" style="left:0px;width:25px;text-align:center;top:197.84px;font-size:12px;line-height:12px;color:#1e6b41;font-weight:400;">1</div>
<div class="t" style="left:0px;width:25px;text-align:center;top:217.84px;font-size:12px;line-height:12px;color:#222;font-weight:400;">2</div>
<div class="t" style="left:0px;width:25px;text-align:center;top:237.84px;font-size:12px;line-height:12px;color:#222;font-weight:400;">3</div>
<div class="t" style="left:0px;width:25px;text-align:center;top:257.84px;font-size:12px;line-height:12px;color:#222;font-weight:400;">4</div>
<div class="t" style="left:0px;width:25px;text-align:center;top:277.84px;font-size:12px;line-height:12px;color:#222;font-weight:400;">5</div>
<div class="t" style="left:0px;width:25px;text-align:center;top:297.84px;font-size:12px;line-height:12px;color:#222;font-weight:400;">6</div>
<div class="t" style="left:0px;width:25px;text-align:center;top:317.84px;font-size:12px;line-height:12px;color:#222;font-weight:400;">23</div>
<div class="t" style="left:0px;width:25px;text-align:center;top:337.84px;font-size:12px;line-height:12px;color:#222;font-weight:400;">24</div>
<div class="t" style="left:0px;width:25px;text-align:center;top:357.84px;font-size:12px;line-height:12px;color:#222;font-weight:400;">25</div>
<div class="t" style="left:0px;width:25px;text-align:center;top:377.84px;font-size:12px;line-height:12px;color:#222;font-weight:400;">26</div>
<div class="t" style="left:0px;width:25px;text-align:center;top:397.84px;font-size:12px;line-height:12px;color:#222;font-weight:400;">27</div>
<div class="t" style="left:0px;width:25px;text-align:center;top:417.84px;font-size:12px;line-height:12px;color:#222;font-weight:400;">28</div>
<div class="t" style="left:0px;width:25px;text-align:center;top:437.84px;font-size:12px;line-height:12px;color:#222;font-weight:400;">29</div>
<div class="t" style="left:0px;width:25px;text-align:center;top:457.84px;font-size:12px;line-height:12px;color:#222;font-weight:400;">30</div>
<div class="t" style="left:0px;width:25px;text-align:center;top:477.84px;font-size:12px;line-height:12px;color:#222;font-weight:400;">31</div>
<div class="t" style="left:0px;width:25px;text-align:center;top:497.84px;font-size:12px;line-height:12px;color:#222;font-weight:400;">32</div>
<div class="t" style="left:0px;width:25px;text-align:center;top:517.84px;font-size:12px;line-height:12px;color:#222;font-weight:400;">33</div>
<div class="t" style="left:0px;width:25px;text-align:center;top:537.84px;font-size:12px;line-height:12px;color:#222;font-weight:400;">34</div>
<div class="t" style="left:0px;width:25px;text-align:center;top:557.84px;font-size:12px;line-height:12px;color:#222;font-weight:400;">35</div>
<div class="t" style="left:0px;width:25px;text-align:center;top:577.84px;font-size:12px;line-height:12px;color:#222;font-weight:400;">36</div>
<div class="t" style="left:0px;width:25px;text-align:center;top:597.84px;font-size:12px;line-height:12px;color:#222;font-weight:400;">37</div>
<div class="t" style="left:0px;width:25px;text-align:center;top:617.84px;font-size:12px;line-height:12px;color:#222;font-weight:400;">38</div>
<div class="t" style="left:0px;width:25px;text-align:center;top:637.84px;font-size:12px;line-height:12px;color:#222;font-weight:400;">39</div>
<div class="r" style="left:1344px;top:192px;width:1px;height:453px;background:#ababab"></div>
<div class="t" style="left:28px;top:216.15px;font-size:14px;line-height:14px;color:#000;font-weight:400;transform:scaleX(0.9286);transform-origin:0 0">CATTLE INVENTORY</div>
<div class="t" style="left:28px;top:236.15px;font-size:14px;line-height:14px;color:#000;font-weight:700;transform:scaleX(0.9286);transform-origin:0 0">As of September 30, 2022</div>
<div class="r" style="left:25px;top:272px;width:687px;height:1px;background:#000"></div>
<div class="r" style="left:64px;top:292px;width:123px;height:1px;background:#000"></div>
<div class="r" style="left:246px;top:292px;width:123px;height:1px;background:#000"></div>
<div class="r" style="left:25px;top:272px;width:1px;height:373px;background:#000"></div>
<div class="r" style="left:64px;top:272px;width:1px;height:373px;background:#000"></div>
<div class="r" style="left:186px;top:272px;width:1px;height:373px;background:#000"></div>
<div class="r" style="left:246px;top:272px;width:1px;height:373px;background:#000"></div>
<div class="r" style="left:368px;top:272px;width:1px;height:373px;background:#000"></div>
<div class="r" style="left:429px;top:272px;width:1px;height:373px;background:#000"></div>
<div class="r" style="left:490px;top:272px;width:1px;height:373px;background:#000"></div>
<div class="r" style="left:551px;top:272px;width:1px;height:373px;background:#000"></div>
<div class="r" style="left:711px;top:272px;width:1px;height:373px;background:#000"></div>
<div class="r" style="left:125px;top:292px;width:1px;height:353px;background:#000"></div>
<div class="r" style="left:307px;top:292px;width:1px;height:353px;background:#000"></div>
<div class="r" style="left:25px;top:312px;width:687px;height:1px;background:#000"></div>
<div class="r" style="left:25px;top:332px;width:687px;height:1px;background:#000"></div>
<div class="r" style="left:25px;top:352px;width:687px;height:1px;background:#000"></div>
<div class="r" style="left:25px;top:372px;width:687px;height:1px;background:#000"></div>
<div class="r" style="left:25px;top:392px;width:687px;height:1px;background:#000"></div>
<div class="r" style="left:25px;top:412px;width:687px;height:1px;background:#000"></div>
<div class="r" style="left:25px;top:432px;width:687px;height:1px;background:#000"></div>
<div class="r" style="left:25px;top:452px;width:687px;height:1px;background:#000"></div>
<div class="r" style="left:25px;top:472px;width:687px;height:1px;background:#000"></div>
<div class="r" style="left:25px;top:492px;width:687px;height:1px;background:#000"></div>
<div class="r" style="left:25px;top:512px;width:687px;height:1px;background:#000"></div>
<div class="r" style="left:25px;top:532px;width:687px;height:1px;background:#000"></div>
<div class="r" style="left:25px;top:552px;width:687px;height:1px;background:#000"></div>
<div class="r" style="left:25px;top:572px;width:687px;height:1px;background:#000"></div>
<div class="r" style="left:25px;top:592px;width:687px;height:1px;background:#000"></div>
<div class="r" style="left:25px;top:612px;width:687px;height:1px;background:#000"></div>
<div class="r" style="left:25px;top:632px;width:687px;height:1px;background:#000"></div>
<div class="t" style="left:82px;width:105px;text-align:center;top:276.15px;font-size:14px;line-height:14px;color:#000;font-weight:400;transform:scaleX(0.9286);transform-origin:50% 0">Assigned No.</div>
<div class="t" style="left:186px;width:61px;text-align:center;top:276.15px;font-size:14px;line-height:14px;color:#000;font-weight:400;transform:scaleX(0.9286);transform-origin:50% 0">Birth</div>
<div class="t" style="left:263px;width:106px;text-align:center;top:276.15px;font-size:14px;line-height:14px;color:#000;font-weight:400;transform:scaleX(0.9286);transform-origin:50% 0">Actual No.</div>
<div class="t" style="left:25px;width:40px;text-align:center;top:296.15px;font-size:14px;line-height:14px;color:#000;font-weight:400;transform:scaleX(0.9286);transform-origin:50% 0">#</div>
<div class="t" style="left:62px;width:62px;text-align:center;top:296.15px;font-size:14px;line-height:14px;color:#000;font-weight:400;transform:scaleX(0.9286);transform-origin:50% 0">Male</div>
<div class="t" style="left:125px;width:62px;text-align:center;top:296.15px;font-size:14px;line-height:14px;color:#000;font-weight:400;transform:scaleX(0.9286);transform-origin:50% 0">Female</div>
<div class="t" style="left:186px;width:61px;text-align:center;top:296.15px;font-size:14px;line-height:14px;color:#000;font-weight:400;transform:scaleX(0.9286);transform-origin:50% 0">Date</div>
<div class="t" style="left:246px;width:62px;text-align:center;top:296.15px;font-size:14px;line-height:14px;color:#000;font-weight:400;transform:scaleX(0.9286);transform-origin:50% 0">Male</div>
<div class="t" style="left:307px;width:62px;text-align:center;top:296.15px;font-size:14px;line-height:14px;color:#000;font-weight:400;transform:scaleX(0.9286);transform-origin:50% 0">Female</div>
<div class="t" style="left:368px;width:62px;text-align:center;top:296.15px;font-size:14px;line-height:14px;color:#000;font-weight:400;transform:scaleX(0.9286);transform-origin:50% 0">Age</div>
<div class="t" style="left:429px;width:62px;text-align:center;top:296.15px;font-size:14px;line-height:14px;color:#000;font-weight:400;transform:scaleX(0.9286);transform-origin:50% 0">DAM</div>
<div class="t" style="left:490px;width:62px;text-align:center;top:296.15px;font-size:14px;line-height:14px;color:#000;font-weight:400;transform:scaleX(0.9286);transform-origin:50% 0">BULL</div>
<div class="t" style="left:551px;width:161px;text-align:center;top:296.15px;font-size:14px;line-height:14px;color:#000;font-weight:400;transform:scaleX(0.9286);transform-origin:50% 0">REMARKS</div>
<div class="t" style="left:25px;width:40px;text-align:center;top:316.15px;font-size:14px;line-height:14px;color:#000;font-weight:400;transform:scaleX(0.9286);transform-origin:50% 0">15</div>
<div class="t" style="left:125px;width:62px;text-align:center;top:316.15px;font-size:14px;line-height:14px;color:#000;font-weight:400;transform:scaleX(0.9286);transform-origin:50% 0">3745</div>
<div class="t" style="left:186px;width:61px;text-align:center;top:316.15px;font-size:14px;line-height:14px;color:#000;font-weight:400;transform:scaleX(0.9286);transform-origin:50% 0">04/01/11</div>
<div class="t" style="left:307px;width:62px;text-align:center;top:316.15px;font-size:14px;line-height:14px;color:#000;font-weight:400;transform:scaleX(0.9286);transform-origin:50% 0">3745</div>
<div class="t" style="left:368px;width:62px;text-align:center;top:316.15px;font-size:14px;line-height:14px;color:#000;font-weight:400;transform:scaleX(0.9286);transform-origin:50% 0">11 yrs+</div>
<div class="t" style="left:429px;width:62px;text-align:center;top:316.15px;font-size:14px;line-height:14px;color:#000;font-weight:400;transform:scaleX(0.9286);transform-origin:50% 0">3349</div>
<div class="t" style="left:490px;width:62px;text-align:center;top:316.15px;font-size:14px;line-height:14px;color:#000;font-weight:400;transform:scaleX(0.9286);transform-origin:50% 0">Y54</div>
<div class="t" style="left:551px;width:161px;text-align:center;top:316.15px;font-size:14px;line-height:14px;color:#000;font-weight:400;transform:scaleX(0.9286);transform-origin:50% 0">dam</div>
<svg class="r" style="left:187px;top:313px;" width="6" height="6" viewBox="0 0 6 6"><path d="M0 0 H6 L0 6 Z" fill="#008000"/></svg>
<div class="t" style="left:25px;width:40px;text-align:center;top:336.15px;font-size:14px;line-height:14px;color:#000;font-weight:400;transform:scaleX(0.9286);transform-origin:50% 0">16</div>
<div class="t" style="left:125px;width:62px;text-align:center;top:336.15px;font-size:14px;line-height:14px;color:#000;font-weight:400;transform:scaleX(0.9286);transform-origin:50% 0">3746</div>
<div class="t" style="left:186px;width:61px;text-align:center;top:336.15px;font-size:14px;line-height:14px;color:#000;font-weight:400;transform:scaleX(0.9286);transform-origin:50% 0">04/06/11</div>
<div class="t" style="left:307px;width:62px;text-align:center;top:336.15px;font-size:14px;line-height:14px;color:#000;font-weight:400;transform:scaleX(0.9286);transform-origin:50% 0">3746</div>
<div class="t" style="left:368px;width:62px;text-align:center;top:336.15px;font-size:14px;line-height:14px;color:#000;font-weight:400;transform:scaleX(0.9286);transform-origin:50% 0">11 yrs+</div>
<div class="t" style="left:429px;width:62px;text-align:center;top:336.15px;font-size:14px;line-height:14px;color:#000;font-weight:400;transform:scaleX(0.9286);transform-origin:50% 0">AF156</div>
<div class="t" style="left:490px;width:62px;text-align:center;top:336.15px;font-size:14px;line-height:14px;color:#000;font-weight:400;transform:scaleX(0.9286);transform-origin:50% 0">Y54</div>
<div class="t" style="left:551px;width:161px;text-align:center;top:336.15px;font-size:14px;line-height:14px;color:#000;font-weight:400;transform:scaleX(0.9286);transform-origin:50% 0">dam</div>
<svg class="r" style="left:187px;top:333px;" width="6" height="6" viewBox="0 0 6 6"><path d="M0 0 H6 L0 6 Z" fill="#008000"/></svg>
<div class="t" style="left:25px;width:40px;text-align:center;top:356.15px;font-size:14px;line-height:14px;color:#000;font-weight:400;transform:scaleX(0.9286);transform-origin:50% 0">17</div>
<div class="t" style="left:125px;width:62px;text-align:center;top:356.15px;font-size:14px;line-height:14px;color:#000;font-weight:400;transform:scaleX(0.9286);transform-origin:50% 0">3747</div>
<div class="t" style="left:186px;width:61px;text-align:center;top:356.15px;font-size:14px;line-height:14px;color:#000;font-weight:400;transform:scaleX(0.9286);transform-origin:50% 0">04/11/11</div>
<div class="t" style="left:307px;width:62px;text-align:center;top:356.15px;font-size:14px;line-height:14px;color:#000;font-weight:400;transform:scaleX(0.9286);transform-origin:50% 0">3747</div>
<div class="t" style="left:368px;width:62px;text-align:center;top:356.15px;font-size:14px;line-height:14px;color:#000;font-weight:400;transform:scaleX(0.9286);transform-origin:50% 0">11 yrs+</div>
<div class="t" style="left:429px;width:62px;text-align:center;top:356.15px;font-size:14px;line-height:14px;color:#000;font-weight:400;transform:scaleX(0.9286);transform-origin:50% 0">3025</div>
<div class="t" style="left:490px;width:62px;text-align:center;top:356.15px;font-size:14px;line-height:14px;color:#000;font-weight:400;transform:scaleX(0.9286);transform-origin:50% 0">3537</div>
<div class="t" style="left:551px;width:161px;text-align:center;top:356.15px;font-size:14px;line-height:14px;color:#000;font-weight:400;transform:scaleX(0.9286);transform-origin:50% 0">dam</div>
<svg class="r" style="left:187px;top:353px;" width="6" height="6" viewBox="0 0 6 6"><path d="M0 0 H6 L0 6 Z" fill="#008000"/></svg>
<div class="t" style="left:25px;width:40px;text-align:center;top:376.15px;font-size:14px;line-height:14px;color:#000;font-weight:400;transform:scaleX(0.9286);transform-origin:50% 0">18</div>
<div class="t" style="left:125px;width:62px;text-align:center;top:376.15px;font-size:14px;line-height:14px;color:#000;font-weight:400;transform:scaleX(0.9286);transform-origin:50% 0">3756</div>
<div class="t" style="left:186px;width:61px;text-align:center;top:376.15px;font-size:14px;line-height:14px;color:#000;font-weight:400;transform:scaleX(0.9286);transform-origin:50% 0">05/04/11</div>
<div class="t" style="left:307px;width:62px;text-align:center;top:376.15px;font-size:14px;line-height:14px;color:#000;font-weight:400;transform:scaleX(0.9286);transform-origin:50% 0">3756</div>
<div class="t" style="left:368px;width:62px;text-align:center;top:376.15px;font-size:14px;line-height:14px;color:#000;font-weight:400;transform:scaleX(0.9286);transform-origin:50% 0">11 yrs+</div>
<div class="t" style="left:429px;width:62px;text-align:center;top:376.15px;font-size:14px;line-height:14px;color:#000;font-weight:400;transform:scaleX(0.9286);transform-origin:50% 0">3385</div>
<div class="t" style="left:490px;width:62px;text-align:center;top:376.15px;font-size:14px;line-height:14px;color:#000;font-weight:400;transform:scaleX(0.9286);transform-origin:50% 0">Y54</div>
<div class="t" style="left:551px;width:161px;text-align:center;top:376.15px;font-size:14px;line-height:14px;color:#000;font-weight:400;transform:scaleX(0.9286);transform-origin:50% 0">dam</div>
<svg class="r" style="left:187px;top:373px;" width="6" height="6" viewBox="0 0 6 6"><path d="M0 0 H6 L0 6 Z" fill="#008000"/></svg>
<div class="t" style="left:25px;width:40px;text-align:center;top:396.15px;font-size:14px;line-height:14px;color:#000;font-weight:400;transform:scaleX(0.9286);transform-origin:50% 0">19</div>
<div class="t" style="left:125px;width:62px;text-align:center;top:396.15px;font-size:14px;line-height:14px;color:#000;font-weight:400;transform:scaleX(0.9286);transform-origin:50% 0">3759</div>
<div class="t" style="left:186px;width:61px;text-align:center;top:396.15px;font-size:14px;line-height:14px;color:#000;font-weight:400;transform:scaleX(0.9286);transform-origin:50% 0">05/16/11</div>
<div class="t" style="left:307px;width:62px;text-align:center;top:396.15px;font-size:14px;line-height:14px;color:#000;font-weight:400;transform:scaleX(0.9286);transform-origin:50% 0">3759</div>
<div class="t" style="left:368px;width:62px;text-align:center;top:396.15px;font-size:14px;line-height:14px;color:#000;font-weight:400;transform:scaleX(0.9286);transform-origin:50% 0">11 yrs+</div>
<div class="t" style="left:429px;width:62px;text-align:center;top:396.15px;font-size:14px;line-height:14px;color:#000;font-weight:400;transform:scaleX(0.9286);transform-origin:50% 0">3392</div>
<div class="t" style="left:490px;width:62px;text-align:center;top:396.15px;font-size:14px;line-height:14px;color:#000;font-weight:400;transform:scaleX(0.9286);transform-origin:50% 0">Y54</div>
<div class="t" style="left:551px;width:161px;text-align:center;top:396.15px;font-size:14px;line-height:14px;color:#000;font-weight:400;transform:scaleX(0.9286);transform-origin:50% 0">dam</div>
<svg class="r" style="left:187px;top:393px;" width="6" height="6" viewBox="0 0 6 6"><path d="M0 0 H6 L0 6 Z" fill="#008000"/></svg>
<div class="t" style="left:25px;width:40px;text-align:center;top:416.15px;font-size:14px;line-height:14px;color:#000;font-weight:400;transform:scaleX(0.9286);transform-origin:50% 0">20</div>
<div class="t" style="left:125px;width:62px;text-align:center;top:416.15px;font-size:14px;line-height:14px;color:#000;font-weight:400;transform:scaleX(0.9286);transform-origin:50% 0">3762</div>
<div class="t" style="left:186px;width:61px;text-align:center;top:416.15px;font-size:14px;line-height:14px;color:#000;font-weight:400;transform:scaleX(0.9286);transform-origin:50% 0">05/20/11</div>
<div class="t" style="left:307px;width:62px;text-align:center;top:416.15px;font-size:14px;line-height:14px;color:#000;font-weight:400;transform:scaleX(0.9286);transform-origin:50% 0">3762</div>
<div class="t" style="left:368px;width:62px;text-align:center;top:416.15px;font-size:14px;line-height:14px;color:#000;font-weight:400;transform:scaleX(0.9286);transform-origin:50% 0">11 yrs+</div>
<div class="t" style="left:429px;width:62px;text-align:center;top:416.15px;font-size:14px;line-height:14px;color:#000;font-weight:400;transform:scaleX(0.9286);transform-origin:50% 0">3560</div>
<div class="t" style="left:490px;width:62px;text-align:center;top:416.15px;font-size:14px;line-height:14px;color:#000;font-weight:400;transform:scaleX(0.9286);transform-origin:50% 0">2815</div>
<div class="t" style="left:551px;width:161px;text-align:center;top:416.15px;font-size:14px;line-height:14px;color:#000;font-weight:400;transform:scaleX(0.9286);transform-origin:50% 0">dam</div>
<svg class="r" style="left:187px;top:413px;" width="6" height="6" viewBox="0 0 6 6"><path d="M0 0 H6 L0 6 Z" fill="#008000"/></svg>
<div class="t" style="left:25px;width:40px;text-align:center;top:436.15px;font-size:14px;line-height:14px;color:#000;font-weight:400;transform:scaleX(0.9286);transform-origin:50% 0">21</div>
<div class="t" style="left:125px;width:62px;text-align:center;top:436.15px;font-size:14px;line-height:14px;color:#000;font-weight:400;transform:scaleX(0.9286);transform-origin:50% 0">3764</div>
<div class="t" style="left:186px;width:61px;text-align:center;top:436.15px;font-size:14px;line-height:14px;color:#000;font-weight:400;transform:scaleX(0.9286);transform-origin:50% 0">05/25/11</div>
<div class="t" style="left:307px;width:62px;text-align:center;top:436.15px;font-size:14px;line-height:14px;color:#000;font-weight:400;transform:scaleX(0.9286);transform-origin:50% 0">3764</div>
<div class="t" style="left:368px;width:62px;text-align:center;top:436.15px;font-size:14px;line-height:14px;color:#000;font-weight:400;transform:scaleX(0.9286);transform-origin:50% 0">11 yrs+</div>
<div class="t" style="left:429px;width:62px;text-align:center;top:436.15px;font-size:14px;line-height:14px;color:#000;font-weight:400;transform:scaleX(0.9286);transform-origin:50% 0">3368</div>
<div class="t" style="left:490px;width:62px;text-align:center;top:436.15px;font-size:14px;line-height:14px;color:#000;font-weight:400;transform:scaleX(0.9286);transform-origin:50% 0">6860</div>
<div class="t" style="left:551px;width:161px;text-align:center;top:436.15px;font-size:14px;line-height:14px;color:#000;font-weight:400;transform:scaleX(0.9286);transform-origin:50% 0">dam</div>
<svg class="r" style="left:187px;top:433px;" width="6" height="6" viewBox="0 0 6 6"><path d="M0 0 H6 L0 6 Z" fill="#008000"/></svg>
<div class="t" style="left:25px;width:40px;text-align:center;top:456.15px;font-size:14px;line-height:14px;color:#000;font-weight:400;transform:scaleX(0.9286);transform-origin:50% 0">22</div>
<div class="t" style="left:125px;width:62px;text-align:center;top:456.15px;font-size:14px;line-height:14px;color:#000;font-weight:400;transform:scaleX(0.9286);transform-origin:50% 0">3766</div>
<div class="t" style="left:186px;width:61px;text-align:center;top:456.15px;font-size:14px;line-height:14px;color:#000;font-weight:400;transform:scaleX(0.9286);transform-origin:50% 0">06/20/11</div>
<div class="t" style="left:307px;width:62px;text-align:center;top:456.15px;font-size:14px;line-height:14px;color:#000;font-weight:400;transform:scaleX(0.9286);transform-origin:50% 0">3766</div>
<div class="t" style="left:368px;width:62px;text-align:center;top:456.15px;font-size:14px;line-height:14px;color:#000;font-weight:400;transform:scaleX(0.9286);transform-origin:50% 0">11 yrs+</div>
<div class="t" style="left:429px;width:62px;text-align:center;top:456.15px;font-size:14px;line-height:14px;color:#000;font-weight:400;transform:scaleX(0.9286);transform-origin:50% 0">3592</div>
<div class="t" style="left:490px;width:62px;text-align:center;top:456.15px;font-size:14px;line-height:14px;color:#000;font-weight:400;transform:scaleX(0.9286);transform-origin:50% 0">007</div>
<div class="t" style="left:551px;width:161px;text-align:center;top:456.15px;font-size:14px;line-height:14px;color:#000;font-weight:400;transform:scaleX(0.9286);transform-origin:50% 0">dam</div>
<svg class="r" style="left:187px;top:453px;" width="6" height="6" viewBox="0 0 6 6"><path d="M0 0 H6 L0 6 Z" fill="#008000"/></svg>
<svg class="r" style="left:491px;top:453px;" width="6" height="6" viewBox="0 0 6 6"><path d="M0 0 H6 L0 6 Z" fill="#008000"/></svg>
<div class="t" style="left:25px;width:40px;text-align:center;top:476.15px;font-size:14px;line-height:14px;color:#000;font-weight:400;transform:scaleX(0.9286);transform-origin:50% 0">23</div>
<div class="t" style="left:125px;width:62px;text-align:center;top:476.15px;font-size:14px;line-height:14px;color:#000;font-weight:400;transform:scaleX(0.9286);transform-origin:50% 0">3773</div>
<div class="t" style="left:186px;width:61px;text-align:center;top:476.15px;font-size:14px;line-height:14px;color:#000;font-weight:400;transform:scaleX(0.9286);transform-origin:50% 0">11/08/11</div>
<div class="t" style="left:307px;width:62px;text-align:center;top:476.15px;font-size:14px;line-height:14px;color:#000;font-weight:400;transform:scaleX(0.9286);transform-origin:50% 0">3773</div>
<div class="t" style="left:368px;width:62px;text-align:center;top:476.15px;font-size:14px;line-height:14px;color:#000;font-weight:400;transform:scaleX(0.9286);transform-origin:50% 0">10 yrs+</div>
<div class="t" style="left:429px;width:62px;text-align:center;top:476.15px;font-size:14px;line-height:14px;color:#000;font-weight:400;transform:scaleX(0.9286);transform-origin:50% 0">3221</div>
<div class="t" style="left:490px;width:62px;text-align:center;top:476.15px;font-size:14px;line-height:14px;color:#000;font-weight:400;transform:scaleX(0.9286);transform-origin:50% 0">3537</div>
<div class="t" style="left:551px;width:161px;text-align:center;top:476.15px;font-size:14px;line-height:14px;color:#000;font-weight:400;transform:scaleX(0.9286);transform-origin:50% 0">dam</div>
<svg class="r" style="left:187px;top:473px;" width="6" height="6" viewBox="0 0 6 6"><path d="M0 0 H6 L0 6 Z" fill="#008000"/></svg>
<div class="t" style="left:25px;width:40px;text-align:center;top:496.15px;font-size:14px;line-height:14px;color:#000;font-weight:400;transform:scaleX(0.9286);transform-origin:50% 0">24</div>
<div class="t" style="left:125px;width:62px;text-align:center;top:496.15px;font-size:14px;line-height:14px;color:#000;font-weight:400;transform:scaleX(0.9286);transform-origin:50% 0">3781</div>
<div class="t" style="left:186px;width:61px;text-align:center;top:496.15px;font-size:14px;line-height:14px;color:#000;font-weight:400;transform:scaleX(0.9286);transform-origin:50% 0">12/20/11</div>
<div class="t" style="left:307px;width:62px;text-align:center;top:496.15px;font-size:14px;line-height:14px;color:#000;font-weight:400;transform:scaleX(0.9286);transform-origin:50% 0">3781</div>
<div class="t" style="left:368px;width:62px;text-align:center;top:496.15px;font-size:14px;line-height:14px;color:#000;font-weight:400;transform:scaleX(0.9286);transform-origin:50% 0">10 yrs+</div>
<div class="t" style="left:429px;width:62px;text-align:center;top:496.15px;font-size:14px;line-height:14px;color:#000;font-weight:400;transform:scaleX(0.9286);transform-origin:50% 0">3450</div>
<div class="t" style="left:490px;width:62px;text-align:center;top:496.15px;font-size:14px;line-height:14px;color:#000;font-weight:400;transform:scaleX(0.9286);transform-origin:50% 0">2815</div>
<div class="t" style="left:551px;width:161px;text-align:center;top:496.15px;font-size:14px;line-height:14px;color:#000;font-weight:400;transform:scaleX(0.9286);transform-origin:50% 0">dam</div>
<svg class="r" style="left:187px;top:493px;" width="6" height="6" viewBox="0 0 6 6"><path d="M0 0 H6 L0 6 Z" fill="#008000"/></svg>
<div class="t" style="left:25px;width:40px;text-align:center;top:516.15px;font-size:14px;line-height:14px;color:#000;font-weight:400;transform:scaleX(0.9286);transform-origin:50% 0">25</div>
<div class="t" style="left:125px;width:62px;text-align:center;top:516.15px;font-size:14px;line-height:14px;color:#000;font-weight:400;transform:scaleX(0.9286);transform-origin:50% 0">3790</div>
<div class="t" style="left:186px;width:61px;text-align:center;top:516.15px;font-size:14px;line-height:14px;color:#000;font-weight:400;transform:scaleX(0.9286);transform-origin:50% 0">01/20/12</div>
<div class="t" style="left:307px;width:62px;text-align:center;top:516.15px;font-size:14px;line-height:14px;color:#000;font-weight:400;transform:scaleX(0.9286);transform-origin:50% 0">3790</div>
<div class="t" style="left:368px;width:62px;text-align:center;top:516.15px;font-size:14px;line-height:14px;color:#000;font-weight:400;transform:scaleX(0.9286);transform-origin:50% 0">10 yrs+</div>
<div class="t" style="left:429px;width:62px;text-align:center;top:516.15px;font-size:14px;line-height:14px;color:#000;font-weight:400;transform:scaleX(0.9286);transform-origin:50% 0">3596</div>
<div class="t" style="left:490px;width:62px;text-align:center;top:516.15px;font-size:14px;line-height:14px;color:#000;font-weight:400;transform:scaleX(0.9286);transform-origin:50% 0">3537</div>
<div class="t" style="left:551px;width:161px;text-align:center;top:516.15px;font-size:14px;line-height:14px;color:#000;font-weight:400;transform:scaleX(0.9286);transform-origin:50% 0">dam</div>
<svg class="r" style="left:187px;top:513px;" width="6" height="6" viewBox="0 0 6 6"><path d="M0 0 H6 L0 6 Z" fill="#008000"/></svg>
<div class="t" style="left:25px;width:40px;text-align:center;top:536.15px;font-size:14px;line-height:14px;color:#000;font-weight:400;transform:scaleX(0.9286);transform-origin:50% 0">26</div>
<div class="t" style="left:125px;width:62px;text-align:center;top:536.15px;font-size:14px;line-height:14px;color:#000;font-weight:400;transform:scaleX(0.9286);transform-origin:50% 0">3801</div>
<div class="t" style="left:186px;width:61px;text-align:center;top:536.15px;font-size:14px;line-height:14px;color:#000;font-weight:400;transform:scaleX(0.9286);transform-origin:50% 0">02/24/12</div>
<div class="t" style="left:307px;width:62px;text-align:center;top:536.15px;font-size:14px;line-height:14px;color:#000;font-weight:400;transform:scaleX(0.9286);transform-origin:50% 0">3801</div>
<div class="t" style="left:368px;width:62px;text-align:center;top:536.15px;font-size:14px;line-height:14px;color:#000;font-weight:400;transform:scaleX(0.9286);transform-origin:50% 0">10 yrs+</div>
<div class="t" style="left:429px;width:62px;text-align:center;top:536.15px;font-size:14px;line-height:14px;color:#000;font-weight:400;transform:scaleX(0.9286);transform-origin:50% 0">3378</div>
<div class="t" style="left:490px;width:62px;text-align:center;top:536.15px;font-size:14px;line-height:14px;color:#000;font-weight:400;transform:scaleX(0.9286);transform-origin:50% 0">007</div>
<div class="t" style="left:551px;width:161px;text-align:center;top:536.15px;font-size:14px;line-height:14px;color:#000;font-weight:400;transform:scaleX(0.9286);transform-origin:50% 0">dam</div>
<svg class="r" style="left:187px;top:533px;" width="6" height="6" viewBox="0 0 6 6"><path d="M0 0 H6 L0 6 Z" fill="#008000"/></svg>
<svg class="r" style="left:491px;top:533px;" width="6" height="6" viewBox="0 0 6 6"><path d="M0 0 H6 L0 6 Z" fill="#008000"/></svg>
<div class="t" style="left:25px;width:40px;text-align:center;top:556.15px;font-size:14px;line-height:14px;color:#000;font-weight:400;transform:scaleX(0.9286);transform-origin:50% 0">27</div>
<div class="t" style="left:125px;width:62px;text-align:center;top:556.15px;font-size:14px;line-height:14px;color:#000;font-weight:400;transform:scaleX(0.9286);transform-origin:50% 0">3808</div>
<div class="t" style="left:186px;width:61px;text-align:center;top:556.15px;font-size:14px;line-height:14px;color:#000;font-weight:400;transform:scaleX(0.9286);transform-origin:50% 0">03/10/12</div>
<div class="t" style="left:307px;width:62px;text-align:center;top:556.15px;font-size:14px;line-height:14px;color:#000;font-weight:400;transform:scaleX(0.9286);transform-origin:50% 0">3808</div>
<div class="t" style="left:368px;width:62px;text-align:center;top:556.15px;font-size:14px;line-height:14px;color:#000;font-weight:400;transform:scaleX(0.9286);transform-origin:50% 0">10 yrs+</div>
<div class="t" style="left:429px;width:62px;text-align:center;top:556.15px;font-size:14px;line-height:14px;color:#000;font-weight:400;transform:scaleX(0.9286);transform-origin:50% 0">3643</div>
<div class="t" style="left:490px;width:62px;text-align:center;top:556.15px;font-size:14px;line-height:14px;color:#000;font-weight:400;transform:scaleX(0.9286);transform-origin:50% 0">005</div>
<div class="t" style="left:551px;width:161px;text-align:center;top:556.15px;font-size:14px;line-height:14px;color:#000;font-weight:400;transform:scaleX(0.9286);transform-origin:50% 0">dam</div>
<svg class="r" style="left:187px;top:553px;" width="6" height="6" viewBox="0 0 6 6"><path d="M0 0 H6 L0 6 Z" fill="#008000"/></svg>
<svg class="r" style="left:491px;top:553px;" width="6" height="6" viewBox="0 0 6 6"><path d="M0 0 H6 L0 6 Z" fill="#008000"/></svg>
<div class="t" style="left:25px;width:40px;text-align:center;top:576.15px;font-size:14px;line-height:14px;color:#000;font-weight:400;transform:scaleX(0.9286);transform-origin:50% 0">28</div>
<div class="t" style="left:125px;width:62px;text-align:center;top:576.15px;font-size:14px;line-height:14px;color:#000;font-weight:400;transform:scaleX(0.9286);transform-origin:50% 0">3814</div>
<div class="t" style="left:186px;width:61px;text-align:center;top:576.15px;font-size:14px;line-height:14px;color:#000;font-weight:400;transform:scaleX(0.9286);transform-origin:50% 0">04/01/12</div>
<div class="t" style="left:307px;width:62px;text-align:center;top:576.15px;font-size:14px;line-height:14px;color:#000;font-weight:400;transform:scaleX(0.9286);transform-origin:50% 0">3814</div>
<div class="t" style="left:368px;width:62px;text-align:center;top:576.15px;font-size:14px;line-height:14px;color:#000;font-weight:400;transform:scaleX(0.9286);transform-origin:50% 0">10 yrs+</div>
<div class="t" style="left:429px;width:62px;text-align:center;top:576.15px;font-size:14px;line-height:14px;color:#000;font-weight:400;transform:scaleX(0.9286);transform-origin:50% 0">3360</div>
<div class="t" style="left:490px;width:62px;text-align:center;top:576.15px;font-size:14px;line-height:14px;color:#000;font-weight:400;transform:scaleX(0.9286);transform-origin:50% 0">Y54</div>
<div class="t" style="left:551px;width:161px;text-align:center;top:576.15px;font-size:14px;line-height:14px;color:#000;font-weight:400;transform:scaleX(0.9286);transform-origin:50% 0">dam</div>
<svg class="r" style="left:187px;top:573px;" width="6" height="6" viewBox="0 0 6 6"><path d="M0 0 H6 L0 6 Z" fill="#008000"/></svg>
<div class="t" style="left:25px;width:40px;text-align:center;top:596.15px;font-size:14px;line-height:14px;color:#000;font-weight:400;transform:scaleX(0.9286);transform-origin:50% 0">29</div>
<div class="t" style="left:125px;width:62px;text-align:center;top:596.15px;font-size:14px;line-height:14px;color:#000;font-weight:400;transform:scaleX(0.9286);transform-origin:50% 0">3827</div>
<div class="t" style="left:186px;width:61px;text-align:center;top:596.15px;font-size:14px;line-height:14px;color:#000;font-weight:400;transform:scaleX(0.9286);transform-origin:50% 0">06/30/12</div>
<div class="t" style="left:307px;width:62px;text-align:center;top:596.15px;font-size:14px;line-height:14px;color:#000;font-weight:400;transform:scaleX(0.9286);transform-origin:50% 0">3827</div>
<div class="t" style="left:368px;width:62px;text-align:center;top:596.15px;font-size:14px;line-height:14px;color:#000;font-weight:400;transform:scaleX(0.9286);transform-origin:50% 0">10 yrs+</div>
<div class="t" style="left:429px;width:62px;text-align:center;top:596.15px;font-size:14px;line-height:14px;color:#000;font-weight:400;transform:scaleX(0.9286);transform-origin:50% 0">3586</div>
<div class="t" style="left:490px;width:62px;text-align:center;top:596.15px;font-size:14px;line-height:14px;color:#000;font-weight:400;transform:scaleX(0.9286);transform-origin:50% 0">3537</div>
<div class="t" style="left:551px;width:161px;text-align:center;top:596.15px;font-size:14px;line-height:14px;color:#000;font-weight:400;transform:scaleX(0.9286);transform-origin:50% 0">dam</div>
<svg class="r" style="left:187px;top:593px;" width="6" height="6" viewBox="0 0 6 6"><path d="M0 0 H6 L0 6 Z" fill="#008000"/></svg>
<div class="t" style="left:25px;width:40px;text-align:center;top:616.15px;font-size:14px;line-height:14px;color:#000;font-weight:400;transform:scaleX(0.9286);transform-origin:50% 0">30</div>
<div class="t" style="left:125px;width:62px;text-align:center;top:616.15px;font-size:14px;line-height:14px;color:#000;font-weight:400;transform:scaleX(0.9286);transform-origin:50% 0">3835</div>
<div class="t" style="left:186px;width:61px;text-align:center;top:616.15px;font-size:14px;line-height:14px;color:#000;font-weight:400;transform:scaleX(0.9286);transform-origin:50% 0">11/06/12</div>
<div class="t" style="left:307px;width:62px;text-align:center;top:616.15px;font-size:14px;line-height:14px;color:#000;font-weight:400;transform:scaleX(0.9286);transform-origin:50% 0">3835</div>
<div class="t" style="left:368px;width:62px;text-align:center;top:616.15px;font-size:14px;line-height:14px;color:#000;font-weight:400;transform:scaleX(0.9286);transform-origin:50% 0">9 yrs+</div>
<div class="t" style="left:429px;width:62px;text-align:center;top:616.15px;font-size:14px;line-height:14px;color:#000;font-weight:400;transform:scaleX(0.9286);transform-origin:50% 0">AF156</div>
<div class="t" style="left:490px;width:62px;text-align:center;top:616.15px;font-size:14px;line-height:14px;color:#000;font-weight:400;transform:scaleX(0.9286);transform-origin:50% 0">Y54</div>
<div class="t" style="left:551px;width:161px;text-align:center;top:616.15px;font-size:14px;line-height:14px;color:#000;font-weight:400;transform:scaleX(0.9286);transform-origin:50% 0">dam</div>
<svg class="r" style="left:187px;top:613px;" width="6" height="6" viewBox="0 0 6 6"><path d="M0 0 H6 L0 6 Z" fill="#008000"/></svg>
<div class="t" style="left:25px;width:40px;text-align:center;top:636.15px;font-size:14px;line-height:14px;color:#000;font-weight:400;transform:scaleX(0.9286);transform-origin:50% 0">31</div>
<div class="t" style="left:125px;width:62px;text-align:center;top:636.15px;font-size:14px;line-height:14px;color:#000;font-weight:400;transform:scaleX(0.9286);transform-origin:50% 0">3836</div>
<div class="t" style="left:186px;width:61px;text-align:center;top:636.15px;font-size:14px;line-height:14px;color:#000;font-weight:400;transform:scaleX(0.9286);transform-origin:50% 0">11/09/12</div>
<div class="t" style="left:307px;width:62px;text-align:center;top:636.15px;font-size:14px;line-height:14px;color:#000;font-weight:400;transform:scaleX(0.9286);transform-origin:50% 0">3836</div>
<div class="t" style="left:368px;width:62px;text-align:center;top:636.15px;font-size:14px;line-height:14px;color:#000;font-weight:400;transform:scaleX(0.9286);transform-origin:50% 0">9 yrs+</div>
<div class="t" style="left:429px;width:62px;text-align:center;top:636.15px;font-size:14px;line-height:14px;color:#000;font-weight:400;transform:scaleX(0.9286);transform-origin:50% 0">3469</div>
<div class="t" style="left:490px;width:62px;text-align:center;top:636.15px;font-size:14px;line-height:14px;color:#000;font-weight:400;transform:scaleX(0.9286);transform-origin:50% 0">007</div>
<div class="t" style="left:551px;width:161px;text-align:center;top:636.15px;font-size:14px;line-height:14px;color:#000;font-weight:400;transform:scaleX(0.9286);transform-origin:50% 0">dam</div>
<svg class="r" style="left:187px;top:633px;" width="6" height="6" viewBox="0 0 6 6"><path d="M0 0 H6 L0 6 Z" fill="#008000"/></svg>
<svg class="r" style="left:491px;top:633px;" width="6" height="6" viewBox="0 0 6 6"><path d="M0 0 H6 L0 6 Z" fill="#008000"/></svg>
<div class="r" style="left:711px;top:173px;width:1px;height:471px;background:#9a9a9a"></div>
<div class="r" style="left:25px;top:312px;width:1320px;height:1px;background:#9a9a9a"></div>
<div class="r" style="left:27px;top:194px;width:97px;height:17px;background:#000"></div>
<div class="r" style="left:24px;top:191px;width:103px;height:23px;border:2px solid #1e7145;box-sizing:border-box"></div>
<div class="r" style="left:122px;top:209px;width:7px;height:7px;background:#fff"></div>
<div class="r" style="left:123px;top:210px;width:5px;height:5px;background:#1e7145"></div>
<div class="r" style="left:1345px;top:173px;width:21px;height:471px;background:#e6e6e6"></div>
<div class="r" style="left:1348px;top:190px;width:15px;height:439px;background:#f0f0f0"></div>
<div class="r" style="left:1348px;top:175px;width:15px;height:15px;background:#fff;border:1px solid #ababab;box-sizing:border-box"></div>
<svg class="r" style="left:1351px;top:179px;" width="9" height="6" viewBox="0 0 9 6"><path d="M0.5 5.5 L4.5 1 L8.5 5.5 Z" fill="#333"/></svg>
<div class="r" style="left:1348px;top:206px;width:15px;height:17px;background:#fff;border:1px solid #ababab;box-sizing:border-box"></div>
<div class="r" style="left:1348px;top:629px;width:15px;height:15px;background:#fff;border:1px solid #ababab;box-sizing:border-box"></div>
<svg class="r" style="left:1351px;top:634px;" width="9" height="6" viewBox="0 0 9 6"><path d="M0.5 0.5 L4.5 5 L8.5 0.5 Z" fill="#333"/></svg>
<div class="r" style="left:0px;top:644px;width:1366px;height:28px;background:#e6e6e6"></div>
<div class="r" style="left:0px;top:644px;width:1345px;height:1px;background:#a6a6a6"></div>
<div class="r" style="left:0px;top:671.5px;width:1366px;height:1px;background:#dcdcdc"></div>
<svg class="r" style="left:24px;top:652px" width="40" height="11" viewBox="24 652 40 11"><path d="M31.3 653.9 L26.9 657.4 L31.3 660.9 Z" fill="#c6c6c6"/><path d="M56 653.9 L60.4 657.4 L56 660.9 Z" fill="#0e6b30"/></svg>
<div class="r" style="left:100px;top:644px;width:91px;height:25px;background:#fff;border-left:1px solid #c6c6c6;border-right:1px solid #c6c6c6;box-sizing:border-box"></div>
<div class="r" style="left:100px;top:666.6px;width:91px;height:2.2px;background:#1e7145"></div>
<div class="t" style="left:112.70px;top:651.30px;font-size:13px;line-height:13px;color:#1e6b41;font-weight:700;transform:scaleX(0.9601);transform-origin:0 0;">invtydec21</div>
<div class="t" style="left:202.00px;top:651.04px;font-size:13.3px;line-height:13.3px;color:#484644;font-weight:400;transform:scaleX(1.1061);transform-origin:0 0;">prod</div>
<div class="r" style="left:243px;top:648px;width:1px;height:20px;background:#bdbdbd"></div>
<div class="t" style="left:258.40px;top:651.04px;font-size:13.3px;line-height:13.3px;color:#484644;font-weight:400;transform:scaleX(0.9903);transform-origin:0 0;">mortality</div>
<div class="r" style="left:324px;top:648px;width:1px;height:20px;background:#bdbdbd"></div>
<div class="t" style="left:336.40px;top:651.04px;font-size:13.3px;line-height:13.3px;color:#484644;font-weight:400;transform:scaleX(0.8951);transform-origin:0 0;">sales</div>
<div class="r" style="left:378px;top:648px;width:1px;height:20px;background:#bdbdbd"></div>
<div class="t" style="left:391.30px;top:651.04px;font-size:13.3px;line-height:13.3px;color:#484644;font-weight:400;transform:scaleX(1.0444);transform-origin:0 0;">butig</div>
<div class="r" style="left:435px;top:648px;width:1px;height:20px;background:#bdbdbd"></div>
<div class="t" style="left:448.00px;top:651.04px;font-size:13.3px;line-height:13.3px;color:#484644;font-weight:400;transform:scaleX(1.0281);transform-origin:0 0;">tbato</div>
<div class="r" style="left:492px;top:648px;width:1px;height:20px;background:#bdbdbd"></div>
<div class="t" style="left:504.50px;top:651.04px;font-size:13.3px;line-height:13.3px;color:#484644;font-weight:400;transform:scaleX(1.0025);transform-origin:0 0;">smdg</div>
<div class="r" style="left:550px;top:648px;width:1px;height:20px;background:#bdbdbd"></div>
<div class="t" style="left:564.80px;top:651.04px;font-size:13.3px;line-height:13.3px;color:#484644;font-weight:400;transform:scaleX(1.0039);transform-origin:0 0;">tbato invty</div>
<div class="r" style="left:642px;top:648px;width:1px;height:20px;background:#bdbdbd"></div>
<div class="t" style="left:658.00px;top:651.04px;font-size:13.3px;line-height:13.3px;color:#484644;font-weight:400;transform:scaleX(0.9930);transform-origin:0 0;">butig invty</div>
<div class="r" style="left:734px;top:648px;width:1px;height:20px;background:#bdbdbd"></div>
<div class="r" style="left:759.2px;top:659.8px;width:2px;height:2px;background:#0b5a1e"></div>
<div class="r" style="left:763.3px;top:659.8px;width:2px;height:2px;background:#0b5a1e"></div>
<div class="r" style="left:767.4px;top:659.8px;width:2px;height:2px;background:#0b5a1e"></div>
<svg class="r" style="left:780px;top:647px" width="22" height="22" viewBox="780 647 22 22"><circle cx="790.8" cy="657.8" r="7.4" fill="none" stroke="#777" stroke-width="1.2"/><path d="M790.8 653.6 V662 M786.6 657.8 H795" stroke="#666" stroke-width="1.8"/></svg>
<div class="r" style="left:819px;top:652.7px;width:2px;height:2px;background:#b0b0b0"></div>
<div class="r" style="left:819px;top:656.7px;width:2px;height:2px;background:#b0b0b0"></div>
<div class="r" style="left:819px;top:660.7px;width:2px;height:2px;background:#b0b0b0"></div>
<div class="r" style="left:836px;top:652px;width:507px;height:14px;background:#f0f0f0"></div>
<div class="r" style="left:836px;top:652px;width:15px;height:14px;background:#fff;border:1px solid #ababab;box-sizing:border-box"></div>
<svg class="r" style="left:840px;top:655px;" width="6" height="9" viewBox="0 0 6 9"><path d="M5.5 0.5 L1 4.5 L5.5 8.5 Z" fill="#333"/></svg>
<div class="r" style="left:851px;top:652px;width:424px;height:14px;background:#fff;border:1px solid #ababab;box-sizing:border-box"></div>
<div class="r" style="left:1328px;top:652px;width:15px;height:14px;background:#fff;border:1px solid #ababab;box-sizing:border-box"></div>
<svg class="r" style="left:1333px;top:655px;" width="6" height="9" viewBox="0 0 6 9"><path d="M0.5 0.5 L5 4.5 L0.5 8.5 Z" fill="#333"/></svg>
<div class="r" style="left:0px;top:672px;width:1366px;height:22px;background:#f3f2f1"></div>
<div class="r" style="left:0px;top:672px;width:1366px;height:1px;background:#d4d4d4"></div>
<div class="t" style="left:7.50px;top:679.07px;font-size:10.9px;line-height:10.9px;color:#484644;font-weight:400;transform:scaleX(0.9458);transform-origin:0 0;">Ready</div>
<svg class="r" style="left:55px;top:673px" width="21" height="19" viewBox="55 673 21 19"><circle cx="64.2" cy="678" r="1.9" fill="none" stroke="#555" stroke-width="1.1"/>
<path d="M58.4 679.4 C59.6 681.6 61.6 681.8 63.2 681.2 C63.4 683.6 62.6 686.4 60.8 689.2 M70.4 679.4 C69.2 681.4 67.4 681.8 65.6 681.2 C65.8 682.4 66 683.4 66.2 684.2" fill="none" stroke="#555" stroke-width="1.1"/>
<path d="M66.4 684.6 L72 689.8 M72 684.6 L66.4 689.8" stroke="#555" stroke-width="1.1"/></svg>
<div class="t" style="left:76.40px;top:679.07px;font-size:10.9px;line-height:10.9px;color:#484644;font-weight:400;transform:scaleX(1.0333);transform-origin:0 0;">Accessibility: Investigate</div>
<div class="r" style="left:1066px;top:673px;width:40px;height:21px;background:#d2d0ce"></div>
<svg class="r" style="left:1075px;top:673px" width="105" height="19" viewBox="1075 673 105 19"><rect x="1079.5" y="676.5" width="12" height="12" fill="none" stroke="#444" stroke-width="1.1"/>
<path d="M1083.5 676.5 V688.5 M1087.5 676.5 V688.5 M1079.5 680.5 H1091.5 M1079.5 684.5 H1091.5" stroke="#444" stroke-width="1.1"/>
<rect x="1119.5" y="676.5" width="13" height="12" fill="none" stroke="#444" stroke-width="1.1"/>
<rect x="1122.5" y="678.5" width="7" height="8" fill="none" stroke="#444" stroke-width="1"/>
<path d="M1124 680.8 H1128 M1124 682.8 H1128 M1124 684.8 H1128" stroke="#444" stroke-width="0.9"/>
<rect x="1159.5" y="676.5" width="13" height="12" fill="none" stroke="#444" stroke-width="1.1"/>
<path d="M1163.5 676.5 V682.5 M1167.5 676.5 V682.5 M1159.5 682.5 H1167.5 V676.5" fill="none" stroke="#444" stroke-width="1.1"/></svg>
<div class="r" style="left:1192px;top:682px;width:8px;height:1.2px;background:#444"></div>
<div class="r" style="left:1205px;top:682.6px;width:100px;height:1.3px;background:#555"></div>
<div class="r" style="left:1253px;top:678px;width:5px;height:11px;background:#333"></div>
<div class="r" style="left:1310px;top:682.6px;width:8px;height:1.1px;background:#444"></div>
<div class="r" style="left:1313.5px;top:679px;width:1.1px;height:8.2px;background:#444"></div>
<div class="t" style="left:1331.80px;top:678.07px;font-size:10.9px;line-height:10.9px;color:#484644;font-weight:400;transform:scaleX(0.9265);transform-origin:0 0;">100%</div>
<div class="r" style="left:0px;top:694px;width:1366px;height:40px;background:linear-gradient(90deg,#243b46 0%,#22343f 45%,#1e2c44 80%,#1c2a47 100%)"></div>
<div class="r" style="left:1361px;top:694px;width:1px;height:40px;background:#5a6478"></div>
<svg class="r" style="left:14px;top:704px" width="22" height="22" viewBox="14 704 22 22"><path d="M16 707.8 L23.2 706.8 V714.2 H16 Z M24.2 706.6 L32.3 705.4 V714.2 H24.2 Z M16 715.2 H23.2 V722.6 L16 721.6 Z M24.2 715.2 H32.3 V723.6 L24.2 722.4 Z" fill="#fff"/></svg>
<div class="r" style="left:48px;top:694px;width:288px;height:40px;background:#f1f1f1"></div>
<svg class="r" style="left:56px;top:700px" width="26" height="28" viewBox="56 700 26 28"><circle cx="70.6" cy="711.4" r="5.6" fill="none" stroke="#1a1a1a" stroke-width="1.3"/><path d="M66.6 715.4 L60.4 721.6" stroke="#1a1a1a" stroke-width="1.5"/></svg>
<div class="t" style="left:88.70px;top:708.20px;font-size:14.3px;line-height:14.3px;color:#222;font-weight:400;transform:scaleX(1.0007);transform-origin:0 0;">Type here to search</div>
<svg class="r" style="left:262px;top:694px" width="68" height="40" viewBox="262 694 68 40"><defs><linearGradient id="mb" x1="0" y1="0" x2="0" y2="1"><stop offset="0" stop-color="#5a6a88"/><stop offset="1" stop-color="#2e3a56"/></linearGradient>
<radialGradient id="sp" cx="0.4" cy="0.4" r="0.6"><stop offset="0" stop-color="#efe6cf"/><stop offset="1" stop-color="#b8a77f"/></radialGradient></defs>
<path d="M271.8 716.7 H320.7 L325.4 722.3 V729.4 H266.8 V722.3 Z" fill="url(#mb)"/>
<rect x="287.8" y="713.9" width="17.7" height="8.7" fill="#48577a" stroke="#2a3550" stroke-width="0.6"/>
<path d="M271.8 716.7 L276 709.5 L281 716.7 Z" fill="#3e4d6e"/>
<path d="M290.5 698.2 V713.9 M294.3 698.2 V713.9 M302.4 698.2 V713.9" stroke="#b9c0cc" stroke-width="1.4"/>
<path d="M289.8 698 H291.2 M293.6 698 H295 M301.7 698 H303.1" stroke="#d8b04a" stroke-width="2.2"/>
<path d="M275 711.5 L283.5 716 L287.8 713.8 M305.5 713.8 L310.5 710" fill="none" stroke="#d8c9a4" stroke-width="0.8"/>
<circle cx="274.4" cy="708.3" r="3.6" fill="url(#sp)"/><circle cx="274.4" cy="708.3" r="1.1" fill="#333"/>
<circle cx="315.6" cy="708.3" r="7.8" fill="url(#sp)"/><circle cx="315.6" cy="708.3" r="0.9" fill="#a05a7a"/></svg>
<svg class="r" style="left:348px;top:702px" width="24" height="24" viewBox="348 702 24 24"><path d="M352 706.6 H360.2 M352 720.3 H360.2 M352.6 709.4 H359.6 V717.6 H352.6 Z" fill="none" stroke="#fff" stroke-width="1.3"/><path d="M366.6 706 V721" stroke="#fff" stroke-width="1.3"/><rect x="364.6" y="711.2" width="4" height="4" fill="#fff"/></svg>
<svg class="r" style="left:396px;top:699px" width="30" height="30" viewBox="396 699 30 30"><defs><linearGradient id="eg1" x1="0" y1="0" x2="1" y2="1"><stop offset="0" stop-color="#35c1f1"/><stop offset="0.55" stop-color="#36b97a"/><stop offset="1" stop-color="#7ad24a"/></linearGradient>
<linearGradient id="eg2" x1="0" y1="0" x2="0" y2="1"><stop offset="0" stop-color="#0c8ad6"/><stop offset="1" stop-color="#114a9e"/></linearGradient></defs>
<circle cx="411.2" cy="713.8" r="12.2" fill="url(#eg1)"/>
<path d="M399.2 715.5 C399.6 708 405 702.4 411.6 702.2 C404.8 704.6 401.8 710 403.6 716.2 C405.6 722.8 413.6 725.2 420.6 722 C417.8 724.8 414.4 726 411.2 726 C404.6 726 399 721.2 399.2 715.5 Z" fill="url(#eg2)"/>
<path d="M405 716.6 C405 711.6 408.6 708.6 413 708.6 C416.6 708.6 419.6 710.6 420.2 714 C417.4 712.2 413.6 712.4 411.6 714.6 C409.8 716.8 410.8 720.6 414.8 722 C409.6 723.2 405 720.6 405 716.6 Z" fill="#1b5fb8"/></svg>
<svg class="r" style="left:444px;top:700px" width="32" height="28" viewBox="444 700 32 28"><path d="M448.6 705.2 H455.4 L457.4 707.2 H470.5 V722.6 H448.6 Z" fill="#e8a822"/>
<rect x="448.6" y="708.6" width="21.9" height="14" fill="#ffd45e"/>
<path d="M453.8 715.2 H465.4 V722.8 H462.4 V719 H456.8 V722.8 H453.8 Z" fill="#3f8fe0"/></svg>
<div class="r" style="left:440px;top:731.6px;width:40px;height:2.4px;background:#79b4ea"></div>
<svg class="r" style="left:494px;top:700px" width="30" height="28" viewBox="494 700 30 28"><defs><linearGradient id="sb" x1="0" y1="0" x2="0" y2="1"><stop offset="0" stop-color="#ffffff"/><stop offset="1" stop-color="#d8d8d8"/></linearGradient></defs>
<path d="M501.6 708.4 V704.2 H513.8 V708.4" fill="none" stroke="#24b0f0" stroke-width="1.6"/>
<path d="M497 708 H520 V724 C520 725.2 519.2 726 518 726 H499 C497.8 726 497 725.2 497 724 Z" fill="url(#sb)"/>
<rect x="504" y="712.2" width="3.7" height="3.9" fill="#f25022"/><rect x="508.7" y="712.2" width="3.8" height="3.9" fill="#7fba00"/>
<rect x="504" y="716.9" width="3.7" height="4" fill="#00a4ef"/><rect x="508.7" y="716.9" width="3.8" height="4" fill="#ffb900"/></svg>
<svg class="r" style="left:543px;top:700px" width="30" height="28" viewBox="543 700 30 28"><defs><linearGradient id="ml" x1="0" y1="0" x2="1" y2="1"><stop offset="0" stop-color="#1c8fe3"/><stop offset="1" stop-color="#3fc1f5"/></linearGradient></defs>
<path d="M545.7 710 L557.9 702.5 L570.1 710 Z" fill="#0d5fb3"/>
<rect x="545.7" y="710" width="24.4" height="14.9" fill="url(#ml)"/>
<path d="M547.5 710 H568.3 L557.9 717 Z" fill="#ececec"/>
<path d="M545.7 724.9 L557.9 716.2 L570.1 724.9 Z" fill="#1b86da" opacity="0.6"/></svg>
<div class="r" style="left:583px;top:694px;width:45px;height:40px;background:#4a5862"></div>
<div class="r" style="left:628px;top:694px;width:3px;height:40px;background:#3a4852"></div>
<div class="r" style="left:583px;top:732px;width:45px;height:2px;background:#79b4ea"></div>
<div class="r" style="left:628px;top:732px;width:3px;height:2px;background:#5a84a8"></div>
<svg class="r" style="left:592px;top:700px" width="30" height="28" viewBox="592 700 30 28"><rect x="601" y="703.1" width="17.9" height="5.4" fill="#33c481"/>
<rect x="601" y="708.5" width="17.9" height="5.2" fill="#21a366"/>
<rect x="601" y="713.7" width="17.9" height="5.2" fill="#107c41"/>
<rect x="601" y="718.9" width="17.9" height="5.2" fill="#185c37"/>
<path d="M609.8 703.1 V713.7" stroke="#2aa46a" stroke-width="0.6"/>
<rect x="595.1" y="708.2" width="12.3" height="11.7" fill="#107c41"/>
<path d="M598.4 710.8 L604.2 717.4 M604.2 710.8 L598.4 717.4" stroke="#fff" stroke-width="1.7"/></svg>
<svg class="r" style="left:926px;top:700px" width="30" height="28" viewBox="926 700 30 28"><defs><linearGradient id="cg" x1="0" y1="0" x2="0" y2="1"><stop offset="0" stop-color="#ffb52e"/><stop offset="1" stop-color="#f08c10"/></linearGradient></defs>
<ellipse cx="939.1" cy="715.4" rx="9.2" ry="3" fill="url(#cg)"/>
<ellipse cx="943" cy="710.5" rx="9.2" ry="3.3" fill="url(#cg)"/>
<ellipse cx="939.1" cy="705.9" rx="9.2" ry="2.7" fill="url(#cg)"/>
<path d="M937 724.8 L940.8 721.2 L944.6 724.8" fill="none" stroke="#5cc22a" stroke-width="2.2"/></svg>
<div class="t" style="left:960.96px;top:707.87px;font-size:13.5px;line-height:13.5px;color:#f0f0f0;font-weight:400;transform:scaleX(0.9449);transform-origin:0 0;">USD/EUR</div>
<div class="t" style="left:1028.00px;top:707.87px;font-size:13.5px;line-height:13.5px;color:#22c322;font-weight:400;transform:scaleX(0.9857);transform-origin:0 0;">+0.82%</div>
<svg class="r" style="left:1098px;top:708px;" width="13" height="9" viewBox="0 0 13 9"><path d="M1 8 L6.5 2 L12 8" fill="none" stroke="#fff" stroke-width="1.3"/></svg>
<svg class="r" style="left:1121px;top:705px;" width="16" height="18" viewBox="0 0 16 18"><rect x="1.5" y="4" width="9" height="10" rx="2" fill="none" stroke="#fff" stroke-width="1.1"/><path d="M10.5 7 L14.5 5 V13 L10.5 11" fill="none" stroke="#fff" stroke-width="1.1"/><path d="M3 1.5 H9 M3 16.5 H9" stroke="#fff" stroke-width="1"/></svg>
<svg class="r" style="left:1144px;top:706px;" width="18" height="14" viewBox="0 0 18 14"><rect x="2.5" y="4" width="13" height="8" fill="none" stroke="#fff" stroke-width="1.1"/><rect x="4" y="5.5" width="10" height="5" fill="#fff"/><path d="M4 1 V4 M7 1 V4" stroke="#fff"/></svg>
<svg class="r" style="left:1170px;top:706px;" width="16" height="16" viewBox="0 0 16 16"><path d="M1 14 A13 13 0 0 1 14 1 M3.5 14 A10.5 10.5 0 0 1 14 3.5 M6 14 A8 8 0 0 1 14 6 M8.5 14 A5.5 5.5 0 0 1 14 8.5" fill="none" stroke="#fff" stroke-width="1"/><rect x="12" y="11" width="3" height="3" fill="#fff"/></svg>
<svg class="r" style="left:1192px;top:705px;" width="18" height="17" viewBox="0 0 18 17"><path d="M1 6 H4 L8.5 2 V15 L4 11 H1 Z" fill="none" stroke="#fff" stroke-width="1.1"/><path d="M11 5.5 C12.5 7 12.5 10 11 11.5 M13 3.5 C15.5 6 15.5 11 13 13.5 M15 1.5 C18.5 5 18.5 12 15 15.5" fill="none" stroke="#fff" stroke-width="1.1"/></svg>
<div class="t" style="left:1219.20px;top:700.14px;font-size:12px;line-height:12px;color:#fff;font-weight:400;transform:scaleX(0.8765);transform-origin:0 0;">ENG</div>
<div class="t" style="left:1224.80px;top:717.14px;font-size:12px;line-height:12px;color:#fff;font-weight:400;transform:scaleX(0.7800);transform-origin:0 0;">US</div>
<div class="t" style="left:1259.60px;top:700.14px;font-size:12px;line-height:12px;color:#fff;font-weight:400;transform:scaleX(0.9285);transform-origin:0 0;">4:35 PM</div>
<div class="t" style="left:1255.00px;top:717.14px;font-size:12px;line-height:12px;color:#fff;font-weight:400;transform:scaleX(0.9495);transform-origin:0 0;">6/23/2023</div>
<svg class="r" style="left:1324px;top:705px;" width="28" height="26" viewBox="0 0 28 26"><path d="M1 1 H17 V13.5 H8 L4.5 17 V13.5 H1 Z" fill="#fff"/><path d="M4 4.5 H14 M4 7.5 H14 M4 10.5 H11" stroke="#1c2a47" stroke-width="1"/><circle cx="17.5" cy="16.5" r="7.5" fill="#2b2b2b" stroke="#777" stroke-width="1"/><text x="14.5" y="21.5" font-family="Liberation Sans" font-size="12" font-weight="700" fill="#fff">7</text></svg>
</body></html>
